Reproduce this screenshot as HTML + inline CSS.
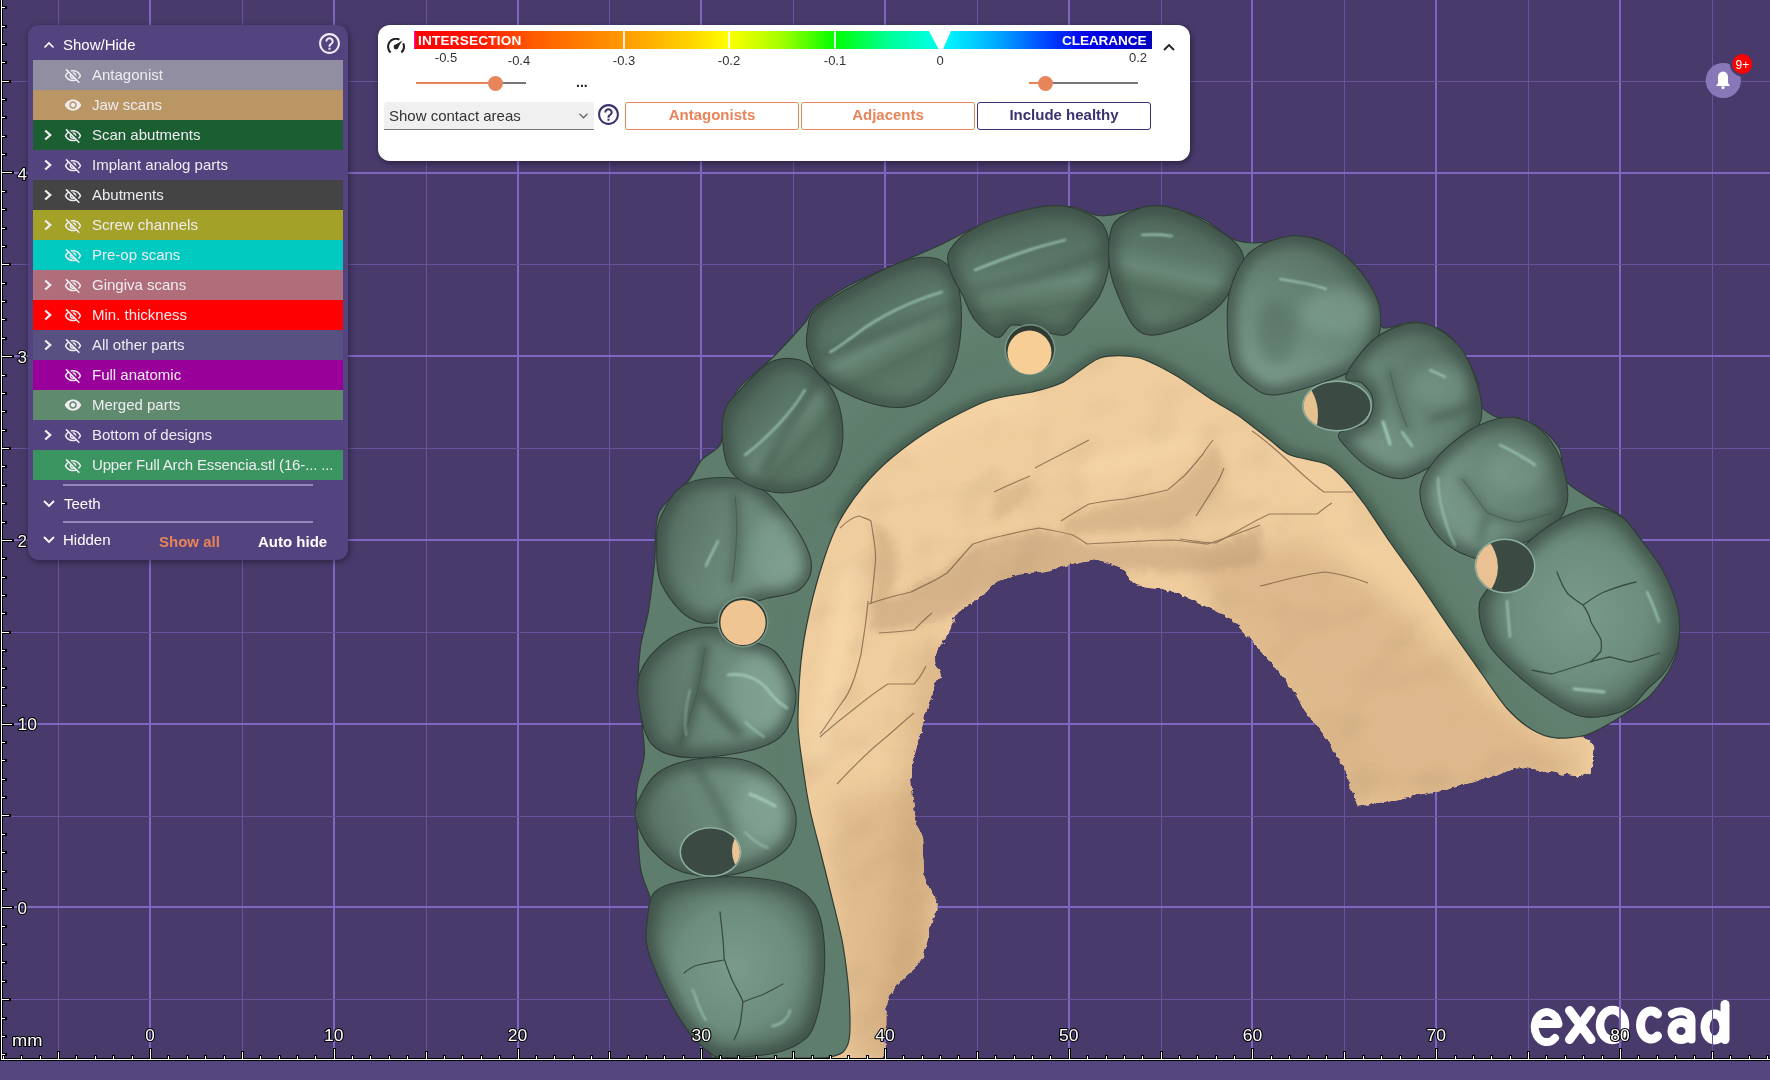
<!DOCTYPE html>
<html><head><meta charset="utf-8">
<style>
*{margin:0;padding:0;box-sizing:border-box}
html,body{width:1770px;height:1080px;overflow:hidden;background:#483b6c;font-family:"Liberation Sans",sans-serif}
#vp{position:absolute;left:0;top:0;width:1770px;height:1080px}
.lab text{font-family:"Liberation Sans",sans-serif;font-size:17px;fill:#fff;stroke:#000;stroke-width:2.2px;paint-order:stroke;stroke-linejoin:round}
#panel{position:absolute;left:28px;top:25px;width:320px;height:535px;background:#53437f;border-radius:11px;box-shadow:1px 2px 7px rgba(0,0,0,0.42)}
.hdr{position:absolute;left:35px;top:11px;font-size:15px;color:#fff;line-height:18px}
.row{position:absolute;left:5px;width:310px;height:30px;color:#efecf1;font-size:15px;line-height:30px}
.row .t{position:absolute;left:59px;top:0}
.row svg{position:absolute}
#tb{position:absolute;left:378px;top:25px;width:812px;height:136px;background:#fff;border-radius:12px;box-shadow:1px 2px 6px rgba(0,0,0,0.45)}
.btn{position:absolute;top:77px;height:28px;border:1.5px solid #e8845a;border-radius:3px;color:#e8845a;font-weight:bold;font-size:15px;line-height:23px;text-align:center}
.num{position:absolute;font-size:13px;color:#333;line-height:14px;transform:translateX(-50%)}
</style></head><body>
<svg id="vp" width="1770" height="1080" viewBox="0 0 1770 1080">
<rect x="0" y="1061" width="1770" height="19" fill="#55457f"/>
<g fill="none" stroke="#fff" stroke-width="9" stroke-linecap="round" stroke-linejoin="round">
<path d="M1535.5,1024 L1558.5,1024 A12,15 0 1 0 1555,1038" stroke-width="8"/>
<path d="M1569.5,1010.5 L1591,1039.5 M1591,1010.5 L1569.5,1039.5"/>
<ellipse cx="1612.5" cy="1025" rx="12.5" ry="15" stroke-width="8.5"/>
<path d="M1657.5,1014 A10.5,14 0 1 0 1657.5,1036"/>
<path d="M1672,1014 C1680,1009 1691,1011 1691.5,1020 L1691.5,1039.5" stroke-width="8"/>
<ellipse cx="1681" cy="1031" rx="9" ry="8.5"/>
<ellipse cx="1714.5" cy="1027" rx="9.5" ry="13"/>
<path d="M1725,1004.5 L1725,1039.5"/>
</g>
<rect x="149" y="0" width="2" height="1058" fill="#7f66c0"/>
<rect x="333" y="0" width="2" height="1058" fill="#7f66c0"/>
<rect x="517" y="0" width="2" height="1058" fill="#7f66c0"/>
<rect x="700" y="0" width="2" height="1058" fill="#7f66c0"/>
<rect x="884" y="0" width="2" height="1058" fill="#7f66c0"/>
<rect x="1068" y="0" width="2" height="1058" fill="#7f66c0"/>
<rect x="1251" y="0" width="2" height="1058" fill="#7f66c0"/>
<rect x="1435" y="0" width="2" height="1058" fill="#7f66c0"/>
<rect x="1619" y="0" width="2" height="1058" fill="#7f66c0"/>
<rect x="58" y="0" width="1" height="1058" fill="#67539d"/>
<rect x="242" y="0" width="1" height="1058" fill="#67539d"/>
<rect x="426" y="0" width="1" height="1058" fill="#67539d"/>
<rect x="609" y="0" width="1" height="1058" fill="#67539d"/>
<rect x="793" y="0" width="1" height="1058" fill="#67539d"/>
<rect x="977" y="0" width="1" height="1058" fill="#67539d"/>
<rect x="1161" y="0" width="1" height="1058" fill="#67539d"/>
<rect x="1344" y="0" width="1" height="1058" fill="#67539d"/>
<rect x="1528" y="0" width="1" height="1058" fill="#67539d"/>
<rect x="1712" y="0" width="1" height="1058" fill="#67539d"/>
<rect x="0" y="172" width="1770" height="2" fill="#7f66c0"/>
<rect x="0" y="355" width="1770" height="2" fill="#7f66c0"/>
<rect x="0" y="539" width="1770" height="2" fill="#7f66c0"/>
<rect x="0" y="723" width="1770" height="2" fill="#7f66c0"/>
<rect x="0" y="906" width="1770" height="2" fill="#7f66c0"/>
<rect x="0" y="81" width="1770" height="1" fill="#67539d"/>
<rect x="0" y="264" width="1770" height="1" fill="#67539d"/>
<rect x="0" y="448" width="1770" height="1" fill="#67539d"/>
<rect x="0" y="632" width="1770" height="1" fill="#67539d"/>
<rect x="0" y="816" width="1770" height="1" fill="#67539d"/>
<rect x="0" y="999" width="1770" height="1" fill="#67539d"/>
<clipPath id="cmodel"><rect x="0" y="0" width="1770" height="1058"/></clipPath><g clip-path="url(#cmodel)"><defs>
<radialGradient id="gt1" cx="0.5" cy="0.5" r="0.6"><stop offset="0" stop-color="#7a9a8a"/><stop offset="0.55" stop-color="#6d8d7d"/><stop offset="1" stop-color="#4c6457"/></radialGradient><linearGradient id="gt12" gradientUnits="userSpaceOnUse" x1="637" y1="842" x2="788" y2="794"><stop offset="0" stop-color="#566f62"/><stop offset="0.45" stop-color="#688676"/><stop offset="1" stop-color="#7d9d8d"/></linearGradient><linearGradient id="gt11" gradientUnits="userSpaceOnUse" x1="640" y1="695" x2="795" y2="696"><stop offset="0" stop-color="#566f62"/><stop offset="0.45" stop-color="#688676"/><stop offset="1" stop-color="#7d9d8d"/></linearGradient><linearGradient id="gt10" gradientUnits="userSpaceOnUse" x1="658" y1="527" x2="801" y2="586"><stop offset="0" stop-color="#566f62"/><stop offset="0.45" stop-color="#688676"/><stop offset="1" stop-color="#7d9d8d"/></linearGradient><linearGradient id="gt2" gradientUnits="userSpaceOnUse" x1="736" y1="381" x2="833" y2="471"><stop offset="0" stop-color="#4a6054"/><stop offset="0.4" stop-color="#5a7768"/><stop offset="0.55" stop-color="#6a8878"/><stop offset="0.7" stop-color="#55705f"/><stop offset="1" stop-color="#62806f"/></linearGradient><linearGradient id="gt3" gradientUnits="userSpaceOnUse" x1="852" y1="265" x2="923" y2="400"><stop offset="0" stop-color="#4a6054"/><stop offset="0.4" stop-color="#5a7768"/><stop offset="0.55" stop-color="#6a8878"/><stop offset="0.7" stop-color="#55705f"/><stop offset="1" stop-color="#62806f"/></linearGradient><linearGradient id="gt4" gradientUnits="userSpaceOnUse" x1="1022" y1="199" x2="1041" y2="356"><stop offset="0" stop-color="#4a6054"/><stop offset="0.4" stop-color="#5a7768"/><stop offset="0.55" stop-color="#6a8878"/><stop offset="0.7" stop-color="#55705f"/><stop offset="1" stop-color="#62806f"/></linearGradient><linearGradient id="gt5" gradientUnits="userSpaceOnUse" x1="1187" y1="202" x2="1159" y2="332"><stop offset="0" stop-color="#4a6054"/><stop offset="0.4" stop-color="#5a7768"/><stop offset="0.55" stop-color="#6a8878"/><stop offset="0.7" stop-color="#55705f"/><stop offset="1" stop-color="#62806f"/></linearGradient><linearGradient id="gt6" gradientUnits="userSpaceOnUse" x1="1343" y1="248" x2="1263" y2="386"><stop offset="0" stop-color="#566f62"/><stop offset="0.45" stop-color="#688676"/><stop offset="1" stop-color="#7d9d8d"/></linearGradient><linearGradient id="gt7" gradientUnits="userSpaceOnUse" x1="1459" y1="356" x2="1344" y2="461"><stop offset="0" stop-color="#566f62"/><stop offset="0.45" stop-color="#688676"/><stop offset="1" stop-color="#7d9d8d"/></linearGradient><linearGradient id="gt8" gradientUnits="userSpaceOnUse" x1="1566" y1="458" x2="1434" y2="524"><stop offset="0" stop-color="#566f62"/><stop offset="0.45" stop-color="#688676"/><stop offset="1" stop-color="#7d9d8d"/></linearGradient><radialGradient id="gt9" cx="0.5" cy="0.5" r="0.6"><stop offset="0" stop-color="#7a9a8a"/><stop offset="0.55" stop-color="#6d8d7d"/><stop offset="1" stop-color="#4c6457"/></radialGradient>
<filter id="b1" filterUnits="userSpaceOnUse" x="0" y="0" width="1770" height="1080"><feGaussianBlur stdDeviation="0.8"/></filter>
<filter id="b2" filterUnits="userSpaceOnUse" x="0" y="0" width="1770" height="1080"><feGaussianBlur stdDeviation="2"/></filter>
<filter id="b4" filterUnits="userSpaceOnUse" x="0" y="0" width="1770" height="1080"><feGaussianBlur stdDeviation="4"/></filter>
<filter id="b7" filterUnits="userSpaceOnUse" x="0" y="0" width="1770" height="1080"><feGaussianBlur stdDeviation="7"/></filter>
<filter id="b12" filterUnits="userSpaceOnUse" x="0" y="0" width="1770" height="1080"><feGaussianBlur stdDeviation="12"/></filter>
<clipPath id="ct1"><path d="M647.0,923.0 C648.3,914.0 647.8,899.2 655.0,892.0 C662.2,884.8 675.8,882.5 690.0,880.0 C704.2,877.5 723.3,876.2 740.0,877.0 C756.7,877.8 777.5,880.3 790.0,885.0 C802.5,889.7 809.3,895.8 815.0,905.0 C820.7,914.2 822.7,926.7 824.0,940.0 C825.3,953.3 824.8,970.3 823.0,985.0 C821.2,999.7 817.2,1018.2 813.0,1028.0 C808.8,1037.8 804.3,1039.8 798.0,1044.0 C791.7,1048.2 784.0,1050.8 775.0,1053.0 C766.0,1055.2 753.3,1056.3 744.0,1057.0 C734.7,1057.7 724.7,1057.7 719.0,1057.0 C713.3,1056.3 714.4,1056.3 710.0,1053.0 C705.6,1049.7 698.6,1044.0 692.8,1037.0 C687.0,1030.0 680.9,1020.9 675.0,1010.7 C669.1,1000.5 662.3,986.4 657.6,975.6 C652.9,964.8 648.8,954.8 647.0,946.0 C645.2,937.2 645.7,932.0 647.0,923.0 Z"/></clipPath>
<clipPath id="ct12"><path d="M636.3,806.0 C639.4,797.2 647.2,781.5 656.7,773.7 C666.2,766.0 679.1,761.9 693.3,759.5 C707.5,757.1 728.4,756.5 742.0,759.5 C755.6,762.5 766.0,769.3 774.8,777.8 C783.6,786.3 792.3,799.5 795.0,810.4 C797.7,821.3 795.7,834.2 791.0,843.0 C786.3,851.8 777.5,857.6 766.7,863.0 C755.9,868.4 740.3,874.2 726.0,875.6 C711.7,877.0 693.2,875.6 681.0,871.5 C668.8,867.4 659.7,858.5 652.6,851.0 C645.5,843.5 641.0,834.2 638.3,826.7 C635.6,819.2 633.2,814.8 636.3,806.0 Z"/></clipPath>
<clipPath id="ct11"><path d="M640.4,672.0 C645.2,659.7 657.5,646.5 669.0,639.0 C680.5,631.5 697.4,627.0 709.6,627.0 C721.8,627.0 731.1,634.9 742.0,639.0 C752.9,643.1 766.0,643.3 774.8,651.5 C783.6,659.7 792.3,676.5 795.0,688.0 C797.7,699.5 794.4,711.9 791.0,720.7 C787.6,729.5 783.6,735.6 774.8,741.0 C766.0,746.4 753.0,750.3 738.0,753.0 C723.0,755.7 699.2,758.7 685.0,757.4 C670.8,756.1 660.0,752.5 652.6,745.0 C645.2,737.5 642.4,724.8 640.4,712.6 C638.4,700.4 635.6,684.3 640.4,672.0 Z"/></clipPath>
<clipPath id="ct10"><path d="M660.7,517.0 C665.4,506.8 672.8,490.9 685.0,484.4 C697.2,477.9 720.4,476.6 734.0,478.0 C747.6,479.4 755.9,483.4 766.7,492.6 C777.5,501.8 791.5,520.8 799.0,533.0 C806.5,545.2 811.5,556.5 811.5,566.0 C811.5,575.5 806.5,584.6 799.0,590.0 C791.5,595.4 776.2,595.7 766.7,598.5 C757.2,601.3 750.8,602.6 742.0,606.7 C733.2,610.8 723.2,621.6 713.7,623.0 C704.2,624.4 693.8,621.6 685.0,614.8 C676.2,608.0 665.4,593.5 660.7,582.0 C656.0,570.5 656.7,556.4 656.7,545.6 C656.7,534.8 656.0,527.2 660.7,517.0 Z"/></clipPath>
<clipPath id="ct2"><path d="M740.0,390.0 C747.5,382.1 760.0,367.5 770.0,362.5 C780.0,357.5 791.7,357.9 800.0,360.0 C808.3,362.1 814.2,369.2 820.0,375.0 C825.8,380.8 831.2,386.7 835.0,395.0 C838.8,403.3 841.7,415.0 842.5,425.0 C843.3,435.0 842.9,445.8 840.0,455.0 C837.1,464.2 833.3,473.8 825.0,480.0 C816.7,486.2 801.7,491.2 790.0,492.5 C778.3,493.8 765.0,491.2 755.0,487.5 C745.0,483.8 735.4,477.9 730.0,470.0 C724.6,462.1 723.3,450.0 722.5,440.0 C721.7,430.0 722.1,418.3 725.0,410.0 C727.9,401.7 732.5,397.9 740.0,390.0 Z"/></clipPath>
<clipPath id="ct3"><path d="M807.5,330.0 C808.8,323.3 807.9,317.1 815.0,310.0 C822.1,302.9 835.8,295.4 850.0,287.5 C864.2,279.6 886.7,267.5 900.0,262.5 C913.3,257.5 921.7,256.7 930.0,257.5 C938.3,258.3 945.0,261.2 950.0,267.5 C955.0,273.8 958.3,282.9 960.0,295.0 C961.7,307.1 961.7,326.7 960.0,340.0 C958.3,353.3 955.8,365.0 950.0,375.0 C944.2,385.0 934.2,394.6 925.0,400.0 C915.8,405.4 906.7,407.9 895.0,407.5 C883.3,407.1 867.5,402.9 855.0,397.5 C842.5,392.1 827.9,382.9 820.0,375.0 C812.1,367.1 809.6,357.5 807.5,350.0 C805.4,342.5 806.2,336.7 807.5,330.0 Z"/></clipPath>
<clipPath id="ct4"><path d="M950.0,250.0 C954.2,242.9 962.5,234.2 975.0,227.5 C987.5,220.8 1010.4,213.6 1025.0,210.0 C1039.6,206.4 1050.8,204.8 1062.5,206.0 C1074.2,207.2 1087.5,212.7 1095.0,217.5 C1102.5,222.3 1105.2,227.1 1107.5,235.0 C1109.8,242.9 1110.0,255.0 1108.8,265.0 C1107.5,275.0 1104.8,285.8 1100.0,295.0 C1095.2,304.2 1085.8,313.3 1080.0,320.0 C1074.2,326.7 1072.1,333.3 1065.0,335.0 C1057.9,336.7 1046.2,331.7 1037.5,330.0 C1028.8,328.3 1019.2,323.8 1012.5,325.0 C1005.8,326.2 1003.8,338.3 997.5,337.5 C991.2,336.7 980.8,327.1 975.0,320.0 C969.2,312.9 966.7,303.3 962.5,295.0 C958.3,286.7 952.1,277.5 950.0,270.0 C947.9,262.5 945.8,257.1 950.0,250.0 Z"/></clipPath>
<clipPath id="ct5"><path d="M1110.0,235.0 C1111.7,226.2 1113.3,222.3 1120.0,217.5 C1126.7,212.7 1140.0,207.2 1150.0,206.0 C1160.0,204.8 1170.0,206.8 1180.0,210.0 C1190.0,213.2 1200.8,219.6 1210.0,225.0 C1219.2,230.4 1229.4,236.7 1235.0,242.5 C1240.6,248.3 1243.8,253.3 1243.8,260.0 C1243.8,266.7 1239.0,275.0 1235.0,282.5 C1231.0,290.0 1226.7,298.3 1220.0,305.0 C1213.3,311.7 1205.8,317.5 1195.0,322.5 C1184.2,327.5 1165.0,334.2 1155.0,335.0 C1145.0,335.8 1140.8,333.3 1135.0,327.5 C1129.2,321.7 1124.2,309.6 1120.0,300.0 C1115.8,290.4 1111.7,280.8 1110.0,270.0 C1108.3,259.2 1108.3,243.8 1110.0,235.0 Z"/></clipPath>
<clipPath id="ct6"><path d="M1230.0,290.0 C1233.8,277.1 1240.0,261.5 1250.0,252.5 C1260.0,243.5 1277.5,237.7 1290.0,236.0 C1302.5,234.3 1315.0,238.5 1325.0,242.5 C1335.0,246.5 1342.5,252.9 1350.0,260.0 C1357.5,267.1 1365.0,276.7 1370.0,285.0 C1375.0,293.3 1378.8,300.8 1380.0,310.0 C1381.2,319.2 1380.8,330.8 1377.5,340.0 C1374.2,349.2 1367.9,358.3 1360.0,365.0 C1352.1,371.7 1344.2,375.0 1330.0,380.0 C1315.8,385.0 1288.3,394.2 1275.0,395.0 C1261.7,395.8 1257.1,390.0 1250.0,385.0 C1242.9,380.0 1236.2,374.2 1232.5,365.0 C1228.8,355.8 1227.9,342.5 1227.5,330.0 C1227.1,317.5 1226.2,302.9 1230.0,290.0 Z"/></clipPath>
<clipPath id="ct7"><path d="M1346.0,376.0 C1348.5,368.3 1364.5,345.8 1377.0,337.0 C1389.5,328.2 1407.3,321.5 1421.0,323.0 C1434.7,324.5 1449.5,335.3 1459.0,346.0 C1468.5,356.7 1474.3,374.8 1478.0,387.0 C1481.7,399.2 1483.2,409.5 1481.0,419.0 C1478.8,428.5 1472.3,436.7 1465.0,444.0 C1457.7,451.3 1447.4,457.2 1437.0,463.0 C1426.6,468.8 1413.5,477.6 1402.5,478.6 C1391.5,479.6 1380.4,474.3 1371.0,469.0 C1361.6,463.7 1351.2,453.0 1346.0,447.0 C1340.8,441.0 1336.3,437.0 1339.6,433.0 C1342.9,429.0 1360.4,428.5 1366.0,423.0 C1371.6,417.5 1373.7,406.7 1373.0,400.0 C1372.3,393.3 1366.5,387.0 1362.0,383.0 C1357.5,379.0 1343.5,383.7 1346.0,376.0 Z"/></clipPath>
<clipPath id="ct8"><path d="M1420.0,490.0 C1420.8,479.2 1426.7,470.0 1435.0,460.0 C1443.3,450.0 1458.3,437.1 1470.0,430.0 C1481.7,422.9 1495.0,418.8 1505.0,417.5 C1515.0,416.2 1522.5,418.8 1530.0,422.5 C1537.5,426.2 1544.6,432.9 1550.0,440.0 C1555.4,447.1 1559.6,455.0 1562.5,465.0 C1565.4,475.0 1568.8,490.0 1567.5,500.0 C1566.2,510.0 1561.2,518.3 1555.0,525.0 C1548.8,531.7 1538.3,535.8 1530.0,540.0 C1521.7,544.2 1512.1,546.7 1505.0,550.0 C1497.9,553.3 1495.8,560.0 1487.5,560.0 C1479.2,560.0 1464.6,555.8 1455.0,550.0 C1445.4,544.2 1435.8,535.0 1430.0,525.0 C1424.2,515.0 1419.2,500.8 1420.0,490.0 Z"/></clipPath>
<clipPath id="ct9"><path d="M1479.0,610.0 C1479.0,600.8 1479.3,600.3 1488.0,588.6 C1496.7,576.9 1517.7,552.0 1531.0,539.7 C1544.3,527.4 1556.8,520.4 1568.0,515.0 C1579.2,509.6 1588.8,507.1 1598.0,507.6 C1607.2,508.1 1615.8,512.6 1623.0,518.0 C1630.2,523.4 1634.4,531.0 1641.0,539.7 C1647.6,548.4 1656.4,558.3 1662.6,570.0 C1668.8,581.7 1675.4,597.7 1678.0,610.0 C1680.6,622.3 1680.1,633.4 1678.0,643.6 C1675.9,653.8 1670.8,663.4 1665.6,671.0 C1660.4,678.6 1653.1,683.3 1647.0,689.5 C1640.9,695.7 1637.2,703.4 1629.0,708.0 C1620.8,712.6 1607.2,716.0 1598.0,717.0 C1588.8,718.0 1583.2,717.6 1574.0,714.0 C1564.8,710.4 1553.2,702.8 1543.0,695.6 C1532.8,688.4 1522.2,679.7 1513.0,671.0 C1503.8,662.3 1493.7,653.8 1488.0,643.6 C1482.3,633.4 1479.0,619.2 1479.0,610.0 Z"/></clipPath>
<clipPath id="cbeige"><path d="M790.0,1058.0 C778.1,1048.2 766.0,985.8 760.0,960.0 C754.0,934.2 733.0,832.0 730.0,800.0 C727.0,768.0 727.0,668.0 730.0,640.0 C733.0,612.0 751.0,542.0 760.0,520.0 C769.0,498.0 804.0,438.0 820.0,420.0 C836.0,402.0 897.0,352.0 920.0,340.0 C943.0,328.0 1022.0,303.0 1050.0,300.0 C1078.0,297.0 1172.0,300.0 1200.0,310.0 C1228.0,320.0 1308.0,381.0 1330.0,400.0 C1352.0,419.0 1403.0,478.0 1420.0,500.0 C1437.0,522.0 1486.0,598.0 1500.0,620.0 C1514.0,642.0 1551.4,708.2 1560.0,720.0 C1568.6,731.8 1582.8,735.5 1586.0,738.0 C1589.2,740.5 1591.6,741.8 1592.0,745.0 C1592.4,748.2 1591.8,767.0 1590.0,770.0 C1588.2,773.0 1581.1,775.4 1574.0,775.0 C1566.9,774.6 1526.4,766.3 1519.0,766.0 C1511.6,765.7 1508.3,769.6 1500.0,772.0 C1491.7,774.4 1450.0,786.7 1436.0,790.0 C1422.0,793.3 1368.0,803.5 1360.0,805.0 C1352.0,806.5 1357.2,808.7 1355.6,805.0 C1354.0,801.3 1347.0,774.6 1344.0,768.0 C1341.0,761.4 1329.7,744.0 1326.0,738.5 C1322.3,733.0 1311.5,718.9 1307.0,712.6 C1302.5,706.3 1287.0,682.7 1281.5,675.6 C1276.0,668.5 1258.0,648.3 1252.0,642.0 C1246.0,635.7 1230.2,617.8 1222.0,612.6 C1213.8,607.4 1178.9,593.0 1170.0,590.0 C1161.1,587.0 1137.8,585.2 1133.0,583.0 C1128.2,580.8 1126.4,570.4 1122.0,568.0 C1117.6,565.6 1096.8,558.8 1089.0,559.0 C1081.2,559.2 1051.2,568.6 1044.0,570.0 C1036.8,571.4 1022.1,571.5 1017.0,572.6 C1011.9,573.8 996.5,579.5 993.0,581.5 C989.5,583.5 985.0,590.0 981.5,593.0 C978.0,596.0 961.3,607.1 957.8,611.0 C954.2,614.9 948.4,627.2 946.0,632.0 C943.6,636.8 934.6,654.1 934.0,658.5 C933.4,662.9 939.9,673.9 940.0,676.0 C940.1,678.1 936.6,676.1 935.0,680.0 C933.4,683.9 926.5,706.2 924.0,715.0 C921.5,723.8 911.0,758.1 910.0,768.0 C909.0,777.9 912.9,807.0 914.0,814.0 C915.1,821.0 920.0,831.7 921.0,838.0 C922.0,844.3 922.4,870.6 924.0,877.0 C925.6,883.4 935.9,897.6 936.6,901.8 C937.3,906.0 932.6,913.4 931.0,919.0 C929.4,924.6 924.1,952.0 921.0,958.0 C917.9,964.0 903.5,974.8 900.0,979.0 C896.5,983.2 887.2,994.7 885.6,1000.0 C884.0,1005.3 884.7,1026.2 884.0,1032.0 C883.3,1037.8 888.0,1055.4 878.6,1058.0 C869.2,1060.6 801.9,1067.8 790.0,1058.0 Z"/></clipPath>
<clipPath id="couter"><path d="M719.0,1058.0 C705.0,1057.3 713.5,1055.8 710.0,1053.0 C706.5,1050.2 697.5,1042.6 692.8,1037.0 C688.1,1031.4 679.7,1018.9 675.0,1010.7 C670.3,1002.5 661.3,984.2 657.6,975.6 C653.9,967.0 648.4,953.0 647.0,946.0 C645.6,939.0 646.5,929.1 647.0,923.0 C647.5,916.9 651.5,907.4 650.6,900.0 C649.7,892.6 642.3,881.5 640.4,867.4 C638.5,853.3 635.8,809.3 636.3,794.0 C636.8,778.7 644.1,767.1 644.4,753.0 C644.7,738.9 638.8,702.1 638.3,688.0 C637.8,673.9 639.0,657.7 640.4,647.4 C641.8,637.1 646.6,622.1 648.5,610.7 C650.4,599.3 653.2,575.0 654.6,562.0 C656.0,549.0 654.1,523.9 658.7,513.0 C663.3,502.1 683.3,487.1 689.0,480.0 C694.7,472.9 697.4,464.7 701.5,460.0 C705.6,455.3 716.9,450.3 720.0,445.0 C723.1,439.7 722.7,427.3 725.0,420.0 C727.3,412.7 731.5,398.0 737.5,390.0 C743.5,382.0 764.3,365.3 770.0,360.0 C775.7,354.7 775.3,355.0 780.0,350.0 C784.7,345.0 800.3,328.2 805.0,322.5 C809.7,316.8 809.0,312.5 815.0,307.5 C821.0,302.5 838.7,291.0 850.0,285.0 C861.3,279.0 888.0,267.8 900.0,262.5 C912.0,257.2 930.0,249.7 940.0,245.0 C950.0,240.3 965.3,231.5 975.0,227.5 C984.7,223.5 1002.5,217.9 1012.5,215.0 C1022.5,212.1 1041.7,207.0 1050.0,206.0 C1058.3,205.0 1069.0,206.3 1075.0,207.5 C1081.0,208.7 1090.0,214.0 1095.0,215.0 C1100.0,216.0 1105.2,216.2 1112.5,215.0 C1119.8,213.8 1141.7,206.8 1150.0,206.0 C1158.3,205.2 1167.7,207.1 1175.0,209.0 C1182.3,210.9 1197.0,215.9 1205.0,220.0 C1213.0,224.1 1227.0,237.0 1235.0,240.0 C1243.0,243.0 1257.7,243.0 1265.0,242.5 C1272.3,242.0 1282.7,236.3 1290.0,236.0 C1297.3,235.7 1312.0,236.8 1320.0,240.0 C1328.0,243.2 1343.3,254.0 1350.0,260.0 C1356.7,266.0 1366.3,279.3 1370.0,285.0 C1373.7,290.7 1375.8,296.8 1377.5,302.5 C1379.2,308.2 1378.5,324.8 1382.5,327.5 C1386.5,330.2 1402.5,323.2 1407.5,322.5 C1412.5,321.8 1415.0,321.2 1420.0,322.5 C1425.0,323.8 1439.0,328.2 1445.0,332.5 C1451.0,336.8 1460.7,348.3 1465.0,355.0 C1469.3,361.7 1475.5,375.8 1477.5,382.5 C1479.5,389.2 1477.3,400.3 1480.0,405.0 C1482.7,409.7 1492.5,415.8 1497.5,417.5 C1502.5,419.2 1511.5,415.8 1517.5,417.5 C1523.5,419.2 1536.8,425.7 1542.5,430.0 C1548.2,434.3 1557.0,443.3 1560.0,450.0 C1563.0,456.7 1560.7,473.3 1565.0,480.0 C1569.3,486.7 1585.2,495.3 1592.5,500.0 C1599.8,504.7 1613.5,509.7 1620.0,515.0 C1626.5,520.3 1634.9,531.4 1641.0,540.0 C1647.1,548.6 1660.7,569.4 1665.6,579.5 C1670.5,589.6 1676.3,607.0 1678.0,616.0 C1679.7,625.0 1679.2,639.4 1678.0,646.7 C1676.8,654.0 1672.4,664.5 1668.7,671.0 C1665.0,677.5 1655.3,690.3 1650.0,695.6 C1644.7,700.9 1634.3,707.3 1629.0,711.0 C1623.7,714.7 1616.3,719.8 1610.6,723.0 C1604.9,726.2 1593.3,733.0 1586.0,735.0 C1578.7,737.0 1562.9,738.8 1555.6,738.0 C1548.3,737.2 1537.5,733.0 1531.0,729.0 C1524.5,725.0 1513.2,715.3 1506.7,708.0 C1500.2,700.7 1489.3,684.3 1482.0,674.0 C1474.7,663.7 1459.8,642.8 1451.7,631.0 C1443.6,619.2 1429.1,597.3 1421.0,585.6 C1412.9,573.9 1398.1,553.7 1390.6,543.0 C1383.1,532.3 1371.1,513.4 1365.0,505.0 C1358.9,496.6 1350.2,485.5 1345.0,480.0 C1339.8,474.5 1333.3,467.3 1326.0,464.0 C1318.7,460.7 1297.5,458.2 1290.0,455.0 C1282.5,451.8 1277.0,445.3 1270.0,440.0 C1263.0,434.7 1245.2,420.3 1237.5,415.0 C1229.8,409.7 1220.8,405.3 1212.5,400.0 C1204.2,394.7 1185.0,380.7 1175.0,375.0 C1165.0,369.3 1147.5,359.8 1137.5,357.5 C1127.5,355.2 1110.0,354.7 1100.0,358.0 C1090.0,361.3 1071.6,378.0 1062.5,382.5 C1053.4,387.0 1042.0,389.6 1032.0,392.0 C1022.0,394.4 1000.5,396.0 987.4,400.7 C974.3,405.4 946.6,419.9 934.0,427.4 C921.4,434.9 902.1,449.1 892.6,457.0 C883.1,464.9 870.1,478.0 863.0,486.7 C855.9,495.4 844.1,512.5 839.0,522.0 C833.9,531.5 828.3,545.9 824.4,557.8 C820.5,569.7 812.8,596.8 809.6,611.0 C806.4,625.2 802.2,649.2 800.7,664.4 C799.2,679.6 797.7,711.2 798.0,725.0 C798.3,738.8 801.4,756.7 803.0,768.0 C804.6,779.3 807.7,799.1 810.0,810.0 C812.3,820.9 817.3,839.3 820.0,850.0 C822.7,860.7 827.1,878.0 830.0,890.0 C832.9,902.0 839.6,927.6 842.0,940.0 C844.4,952.4 846.9,972.6 848.0,983.0 C849.1,993.4 849.9,1010.4 850.0,1018.0 C850.1,1025.6 849.9,1035.5 849.0,1040.0 C848.1,1044.5 845.5,1049.7 843.0,1052.0 C840.5,1054.3 833.7,1056.2 830.0,1057.0 C826.3,1057.8 829.8,1057.9 815.0,1058.0 C800.2,1058.1 733.0,1058.7 719.0,1058.0 Z"/></clipPath>
<filter id="bump" filterUnits="userSpaceOnUse" x="700" y="300" width="950" height="760"><feTurbulence type="fractalNoise" baseFrequency="0.014" numOctaves="2" seed="11" result="n"/><feDiffuseLighting in="n" surfaceScale="4.5" diffuseConstant="1.22" lighting-color="#ffffff" result="l"><feDistantLight azimuth="235" elevation="55"/></feDiffuseLighting><feComposite in="l" in2="SourceGraphic" operator="arithmetic" k1="1" k2="0" k3="0" k4="0"/></filter>
</defs>
<filter id="rough" filterUnits="userSpaceOnUse" x="650" y="250" width="1000" height="830"><feTurbulence type="turbulence" baseFrequency="0.09" numOctaves="2" seed="5" result="t"/><feDisplacementMap in="SourceGraphic" in2="t" scale="5" xChannelSelector="R" yChannelSelector="G"/></filter>
<g filter="url(#rough)">
<path d="M790.0,1058.0 C778.1,1048.2 766.0,985.8 760.0,960.0 C754.0,934.2 733.0,832.0 730.0,800.0 C727.0,768.0 727.0,668.0 730.0,640.0 C733.0,612.0 751.0,542.0 760.0,520.0 C769.0,498.0 804.0,438.0 820.0,420.0 C836.0,402.0 897.0,352.0 920.0,340.0 C943.0,328.0 1022.0,303.0 1050.0,300.0 C1078.0,297.0 1172.0,300.0 1200.0,310.0 C1228.0,320.0 1308.0,381.0 1330.0,400.0 C1352.0,419.0 1403.0,478.0 1420.0,500.0 C1437.0,522.0 1486.0,598.0 1500.0,620.0 C1514.0,642.0 1551.4,708.2 1560.0,720.0 C1568.6,731.8 1582.8,735.5 1586.0,738.0 C1589.2,740.5 1591.6,741.8 1592.0,745.0 C1592.4,748.2 1591.8,767.0 1590.0,770.0 C1588.2,773.0 1581.1,775.4 1574.0,775.0 C1566.9,774.6 1526.4,766.3 1519.0,766.0 C1511.6,765.7 1508.3,769.6 1500.0,772.0 C1491.7,774.4 1450.0,786.7 1436.0,790.0 C1422.0,793.3 1368.0,803.5 1360.0,805.0 C1352.0,806.5 1357.2,808.7 1355.6,805.0 C1354.0,801.3 1347.0,774.6 1344.0,768.0 C1341.0,761.4 1329.7,744.0 1326.0,738.5 C1322.3,733.0 1311.5,718.9 1307.0,712.6 C1302.5,706.3 1287.0,682.7 1281.5,675.6 C1276.0,668.5 1258.0,648.3 1252.0,642.0 C1246.0,635.7 1230.2,617.8 1222.0,612.6 C1213.8,607.4 1178.9,593.0 1170.0,590.0 C1161.1,587.0 1137.8,585.2 1133.0,583.0 C1128.2,580.8 1126.4,570.4 1122.0,568.0 C1117.6,565.6 1096.8,558.8 1089.0,559.0 C1081.2,559.2 1051.2,568.6 1044.0,570.0 C1036.8,571.4 1022.1,571.5 1017.0,572.6 C1011.9,573.8 996.5,579.5 993.0,581.5 C989.5,583.5 985.0,590.0 981.5,593.0 C978.0,596.0 961.3,607.1 957.8,611.0 C954.2,614.9 948.4,627.2 946.0,632.0 C943.6,636.8 934.6,654.1 934.0,658.5 C933.4,662.9 939.9,673.9 940.0,676.0 C940.1,678.1 936.6,676.1 935.0,680.0 C933.4,683.9 926.5,706.2 924.0,715.0 C921.5,723.8 911.0,758.1 910.0,768.0 C909.0,777.9 912.9,807.0 914.0,814.0 C915.1,821.0 920.0,831.7 921.0,838.0 C922.0,844.3 922.4,870.6 924.0,877.0 C925.6,883.4 935.9,897.6 936.6,901.8 C937.3,906.0 932.6,913.4 931.0,919.0 C929.4,924.6 924.1,952.0 921.0,958.0 C917.9,964.0 903.5,974.8 900.0,979.0 C896.5,983.2 887.2,994.7 885.6,1000.0 C884.0,1005.3 884.7,1026.2 884.0,1032.0 C883.3,1037.8 888.0,1055.4 878.6,1058.0 C869.2,1060.6 801.9,1067.8 790.0,1058.0 Z" fill="#ebc795"/>
<g clip-path="url(#cbeige)">
<rect x="700" y="300" width="950" height="760" fill="#f0cd9e" filter="url(#bump)"/>
<path d="M1190,560 L1300,540 L1400,600 L1500,700 L1580,745 L1560,790 L1380,810 L1300,700 L1220,620 Z" fill="#b89068" opacity="0.33" filter="url(#b12)"/>
<path d="M830,800 L930,780 L930,1058 L840,1058 Z" fill="#b89068" opacity="0.3" filter="url(#b12)"/>
<path d="M1000,600 C1100,590 1200,640 1290,720 C1330,760 1350,790 1360,810" fill="none" stroke="#b38d62" stroke-width="40" opacity="0.3" filter="url(#b12)"/>
<path d="M935,650 C920,760 920,900 890,1060" fill="none" stroke="#b38d62" stroke-width="40" opacity="0.3" filter="url(#b12)"/>
<path d="M850,560 C840,640 825,700 815,760" fill="none" stroke="#fbe0b3" stroke-width="22" opacity="0.5" filter="url(#b7)"/>
<path d="M900,440 C950,410 1000,395 1040,400" fill="none" stroke="#fadcae" stroke-width="30" opacity="0.45" filter="url(#b12)"/>
<path d="M1300,470 C1380,560 1450,660 1570,740" fill="none" stroke="#f7d6a6" stroke-width="30" opacity="0.4" filter="url(#b12)"/>
<path d="M1080,470 C1120,460 1170,450 1200,430" fill="none" stroke="#fadcae" stroke-width="20" opacity="0.4" filter="url(#b7)"/>
<g fill="#a88460" filter="url(#b4)">
<path d="M870,604 C900,595 930,580 973,545 C1000,536 1030,529 1039,528 C1060,532 1080,540 1087,545 C1120,542 1170,540 1208,545 C1230,540 1250,530 1260,525 L1260,560 C1220,575 1150,570 1090,565 C1040,575 990,585 950,615 C920,625 890,630 870,630 Z" opacity="0.35"/>
<path d="M1061,521 C1080,510 1110,500 1167,490 C1190,470 1205,450 1213,440 L1225,470 C1215,500 1190,520 1170,525 C1120,530 1090,532 1061,535 Z" opacity="0.3"/>
<path d="M880,525 C900,540 905,580 880,605 L870,600 C873,570 872,545 871,521 Z" opacity="0.3"/>
<path d="M994,492 C1010,485 1020,480 1030,476 C1030,500 1010,515 990,520 Z" opacity="0.25"/>
</g>

</g>
</g>
<g clip-path="url(#cbeige)"><g fill="none" stroke="#5e4630" opacity="0.6" stroke-width="1.2">
<path d="M840,528 C848,520 853,517 859,516 C864,518 868,519 871,521 C873,535 876,548 875.6,559 C874,580 872,595 871,604"/>
<path d="M868.5,604 C885,598 898,595 911,592 C925,585 937,580 947,573 C955,565 965,552 973,544 C985,540 995,537 1006,535 C1018,532 1028,530 1039,528 C1050,530 1062,532 1072.6,535 C1078,538 1083,541 1087,544 C1100,543 1112,543 1125,542 C1140,541 1158,540 1172,540 C1185,541 1197,543 1208,544 C1225,538 1243,532 1260,525"/>
<path d="M994,492 C1006,486 1018,481 1030,476"/>
<path d="M1061,521 C1072,514 1080,509 1089,504 C1100,502 1112,500 1125,499 C1140,496 1155,493 1167.5,490 C1174,485 1179,480 1184,476 C1191,469 1197,461 1203,454 C1206,449 1209,445 1213,440"/>
<path d="M1196,516 C1203,505 1210,494 1217,483 C1220,478 1222,473 1224,468"/>
<path d="M1035,468 C1050,460 1070,450 1089,440"/>
<path d="M820,737 C830,728 840,720 849,713 C865,700 878,690 888,684 C900,684 908,684 914,684 C920,678 923,672 926,666"/>
<path d="M837,784 C855,765 868,752 879,743 C895,730 905,720 914,713"/>
<path d="M879,633 C895,632 905,631 914,630 C922,622 928,616 932,613"/>
<path d="M868,601 C866,625 863,640 861,654 C855,680 848,695 843,701 C833,715 825,728 820,734"/>
<path d="M1180,539 C1195,541 1205,543 1216,543 C1240,530 1255,520 1270,514 C1290,514 1305,514 1317,514 C1322,510 1327,506 1332,503"/>
<path d="M1260,586 C1285,580 1305,574 1325,572 C1340,574 1355,578 1368,583"/>
<path d="M1252,431 C1280,450 1300,475 1324,492 C1335,492 1345,492 1353,492"/>
</g>
</g>
<path d="M719.0,1058.0 C705.0,1057.3 713.5,1055.8 710.0,1053.0 C706.5,1050.2 697.5,1042.6 692.8,1037.0 C688.1,1031.4 679.7,1018.9 675.0,1010.7 C670.3,1002.5 661.3,984.2 657.6,975.6 C653.9,967.0 648.4,953.0 647.0,946.0 C645.6,939.0 646.5,929.1 647.0,923.0 C647.5,916.9 651.5,907.4 650.6,900.0 C649.7,892.6 642.3,881.5 640.4,867.4 C638.5,853.3 635.8,809.3 636.3,794.0 C636.8,778.7 644.1,767.1 644.4,753.0 C644.7,738.9 638.8,702.1 638.3,688.0 C637.8,673.9 639.0,657.7 640.4,647.4 C641.8,637.1 646.6,622.1 648.5,610.7 C650.4,599.3 653.2,575.0 654.6,562.0 C656.0,549.0 654.1,523.9 658.7,513.0 C663.3,502.1 683.3,487.1 689.0,480.0 C694.7,472.9 697.4,464.7 701.5,460.0 C705.6,455.3 716.9,450.3 720.0,445.0 C723.1,439.7 722.7,427.3 725.0,420.0 C727.3,412.7 731.5,398.0 737.5,390.0 C743.5,382.0 764.3,365.3 770.0,360.0 C775.7,354.7 775.3,355.0 780.0,350.0 C784.7,345.0 800.3,328.2 805.0,322.5 C809.7,316.8 809.0,312.5 815.0,307.5 C821.0,302.5 838.7,291.0 850.0,285.0 C861.3,279.0 888.0,267.8 900.0,262.5 C912.0,257.2 930.0,249.7 940.0,245.0 C950.0,240.3 965.3,231.5 975.0,227.5 C984.7,223.5 1002.5,217.9 1012.5,215.0 C1022.5,212.1 1041.7,207.0 1050.0,206.0 C1058.3,205.0 1069.0,206.3 1075.0,207.5 C1081.0,208.7 1090.0,214.0 1095.0,215.0 C1100.0,216.0 1105.2,216.2 1112.5,215.0 C1119.8,213.8 1141.7,206.8 1150.0,206.0 C1158.3,205.2 1167.7,207.1 1175.0,209.0 C1182.3,210.9 1197.0,215.9 1205.0,220.0 C1213.0,224.1 1227.0,237.0 1235.0,240.0 C1243.0,243.0 1257.7,243.0 1265.0,242.5 C1272.3,242.0 1282.7,236.3 1290.0,236.0 C1297.3,235.7 1312.0,236.8 1320.0,240.0 C1328.0,243.2 1343.3,254.0 1350.0,260.0 C1356.7,266.0 1366.3,279.3 1370.0,285.0 C1373.7,290.7 1375.8,296.8 1377.5,302.5 C1379.2,308.2 1378.5,324.8 1382.5,327.5 C1386.5,330.2 1402.5,323.2 1407.5,322.5 C1412.5,321.8 1415.0,321.2 1420.0,322.5 C1425.0,323.8 1439.0,328.2 1445.0,332.5 C1451.0,336.8 1460.7,348.3 1465.0,355.0 C1469.3,361.7 1475.5,375.8 1477.5,382.5 C1479.5,389.2 1477.3,400.3 1480.0,405.0 C1482.7,409.7 1492.5,415.8 1497.5,417.5 C1502.5,419.2 1511.5,415.8 1517.5,417.5 C1523.5,419.2 1536.8,425.7 1542.5,430.0 C1548.2,434.3 1557.0,443.3 1560.0,450.0 C1563.0,456.7 1560.7,473.3 1565.0,480.0 C1569.3,486.7 1585.2,495.3 1592.5,500.0 C1599.8,504.7 1613.5,509.7 1620.0,515.0 C1626.5,520.3 1634.9,531.4 1641.0,540.0 C1647.1,548.6 1660.7,569.4 1665.6,579.5 C1670.5,589.6 1676.3,607.0 1678.0,616.0 C1679.7,625.0 1679.2,639.4 1678.0,646.7 C1676.8,654.0 1672.4,664.5 1668.7,671.0 C1665.0,677.5 1655.3,690.3 1650.0,695.6 C1644.7,700.9 1634.3,707.3 1629.0,711.0 C1623.7,714.7 1616.3,719.8 1610.6,723.0 C1604.9,726.2 1593.3,733.0 1586.0,735.0 C1578.7,737.0 1562.9,738.8 1555.6,738.0 C1548.3,737.2 1537.5,733.0 1531.0,729.0 C1524.5,725.0 1513.2,715.3 1506.7,708.0 C1500.2,700.7 1489.3,684.3 1482.0,674.0 C1474.7,663.7 1459.8,642.8 1451.7,631.0 C1443.6,619.2 1429.1,597.3 1421.0,585.6 C1412.9,573.9 1398.1,553.7 1390.6,543.0 C1383.1,532.3 1371.1,513.4 1365.0,505.0 C1358.9,496.6 1350.2,485.5 1345.0,480.0 C1339.8,474.5 1333.3,467.3 1326.0,464.0 C1318.7,460.7 1297.5,458.2 1290.0,455.0 C1282.5,451.8 1277.0,445.3 1270.0,440.0 C1263.0,434.7 1245.2,420.3 1237.5,415.0 C1229.8,409.7 1220.8,405.3 1212.5,400.0 C1204.2,394.7 1185.0,380.7 1175.0,375.0 C1165.0,369.3 1147.5,359.8 1137.5,357.5 C1127.5,355.2 1110.0,354.7 1100.0,358.0 C1090.0,361.3 1071.6,378.0 1062.5,382.5 C1053.4,387.0 1042.0,389.6 1032.0,392.0 C1022.0,394.4 1000.5,396.0 987.4,400.7 C974.3,405.4 946.6,419.9 934.0,427.4 C921.4,434.9 902.1,449.1 892.6,457.0 C883.1,464.9 870.1,478.0 863.0,486.7 C855.9,495.4 844.1,512.5 839.0,522.0 C833.9,531.5 828.3,545.9 824.4,557.8 C820.5,569.7 812.8,596.8 809.6,611.0 C806.4,625.2 802.2,649.2 800.7,664.4 C799.2,679.6 797.7,711.2 798.0,725.0 C798.3,738.8 801.4,756.7 803.0,768.0 C804.6,779.3 807.7,799.1 810.0,810.0 C812.3,820.9 817.3,839.3 820.0,850.0 C822.7,860.7 827.1,878.0 830.0,890.0 C832.9,902.0 839.6,927.6 842.0,940.0 C844.4,952.4 846.9,972.6 848.0,983.0 C849.1,993.4 849.9,1010.4 850.0,1018.0 C850.1,1025.6 849.9,1035.5 849.0,1040.0 C848.1,1044.5 845.5,1049.7 843.0,1052.0 C840.5,1054.3 833.7,1056.2 830.0,1057.0 C826.3,1057.8 829.8,1057.9 815.0,1058.0 C800.2,1058.1 733.0,1058.7 719.0,1058.0 Z" fill="#5f7d6c"/>
<g clip-path="url(#couter)">
<path d="M760,1058 C740,900 720,700 760,540 C800,420 900,330 1050,300 C1200,300 1330,380 1420,500 C1480,600 1540,700 1590,740" fill="none" stroke="#6a8878" stroke-width="40" opacity="0.35" filter="url(#b12)"/>

<path d="M1482.0,674.0 C1478.0,668.3 1459.8,642.8 1451.7,631.0 C1443.6,619.2 1429.1,597.3 1421.0,585.6 C1412.9,573.9 1398.1,553.7 1390.6,543.0 C1383.1,532.3 1371.1,513.4 1365.0,505.0 C1358.9,496.6 1350.2,485.5 1345.0,480.0 C1339.8,474.5 1333.3,467.3 1326.0,464.0 C1318.7,460.7 1297.5,458.2 1290.0,455.0 C1282.5,451.8 1277.0,445.3 1270.0,440.0 C1263.0,434.7 1245.2,420.3 1237.5,415.0 C1229.8,409.7 1220.8,405.3 1212.5,400.0 C1204.2,394.7 1185.0,380.7 1175.0,375.0 C1165.0,369.3 1147.5,359.8 1137.5,357.5 C1127.5,355.2 1110.0,354.7 1100.0,358.0 C1090.0,361.3 1071.6,378.0 1062.5,382.5 C1053.4,387.0 1042.0,389.6 1032.0,392.0 C1022.0,394.4 1000.5,396.0 987.4,400.7 C974.3,405.4 946.6,419.9 934.0,427.4 C921.4,434.9 902.1,449.1 892.6,457.0 C883.1,464.9 870.1,478.0 863.0,486.7 C855.9,495.4 842.2,517.3 839.0,522.0" fill="none" stroke="#34483e" stroke-width="14" opacity="0.55" filter="url(#b4)"/>
</g>
<path d="M719.0,1058.0 C705.0,1057.3 713.5,1055.8 710.0,1053.0 C706.5,1050.2 697.5,1042.6 692.8,1037.0 C688.1,1031.4 679.7,1018.9 675.0,1010.7 C670.3,1002.5 661.3,984.2 657.6,975.6 C653.9,967.0 648.4,953.0 647.0,946.0 C645.6,939.0 646.5,929.1 647.0,923.0 C647.5,916.9 651.5,907.4 650.6,900.0 C649.7,892.6 642.3,881.5 640.4,867.4 C638.5,853.3 635.8,809.3 636.3,794.0 C636.8,778.7 644.1,767.1 644.4,753.0 C644.7,738.9 638.8,702.1 638.3,688.0 C637.8,673.9 639.0,657.7 640.4,647.4 C641.8,637.1 646.6,622.1 648.5,610.7 C650.4,599.3 653.2,575.0 654.6,562.0 C656.0,549.0 654.1,523.9 658.7,513.0 C663.3,502.1 683.3,487.1 689.0,480.0 C694.7,472.9 697.4,464.7 701.5,460.0 C705.6,455.3 716.9,450.3 720.0,445.0 C723.1,439.7 722.7,427.3 725.0,420.0 C727.3,412.7 731.5,398.0 737.5,390.0 C743.5,382.0 764.3,365.3 770.0,360.0 C775.7,354.7 775.3,355.0 780.0,350.0 C784.7,345.0 800.3,328.2 805.0,322.5 C809.7,316.8 809.0,312.5 815.0,307.5 C821.0,302.5 838.7,291.0 850.0,285.0 C861.3,279.0 888.0,267.8 900.0,262.5 C912.0,257.2 930.0,249.7 940.0,245.0 C950.0,240.3 965.3,231.5 975.0,227.5 C984.7,223.5 1002.5,217.9 1012.5,215.0 C1022.5,212.1 1041.7,207.0 1050.0,206.0 C1058.3,205.0 1069.0,206.3 1075.0,207.5 C1081.0,208.7 1090.0,214.0 1095.0,215.0 C1100.0,216.0 1105.2,216.2 1112.5,215.0 C1119.8,213.8 1141.7,206.8 1150.0,206.0 C1158.3,205.2 1167.7,207.1 1175.0,209.0 C1182.3,210.9 1197.0,215.9 1205.0,220.0 C1213.0,224.1 1227.0,237.0 1235.0,240.0 C1243.0,243.0 1257.7,243.0 1265.0,242.5 C1272.3,242.0 1282.7,236.3 1290.0,236.0 C1297.3,235.7 1312.0,236.8 1320.0,240.0 C1328.0,243.2 1343.3,254.0 1350.0,260.0 C1356.7,266.0 1366.3,279.3 1370.0,285.0 C1373.7,290.7 1375.8,296.8 1377.5,302.5 C1379.2,308.2 1378.5,324.8 1382.5,327.5 C1386.5,330.2 1402.5,323.2 1407.5,322.5 C1412.5,321.8 1415.0,321.2 1420.0,322.5 C1425.0,323.8 1439.0,328.2 1445.0,332.5 C1451.0,336.8 1460.7,348.3 1465.0,355.0 C1469.3,361.7 1475.5,375.8 1477.5,382.5 C1479.5,389.2 1477.3,400.3 1480.0,405.0 C1482.7,409.7 1492.5,415.8 1497.5,417.5 C1502.5,419.2 1511.5,415.8 1517.5,417.5 C1523.5,419.2 1536.8,425.7 1542.5,430.0 C1548.2,434.3 1557.0,443.3 1560.0,450.0 C1563.0,456.7 1560.7,473.3 1565.0,480.0 C1569.3,486.7 1585.2,495.3 1592.5,500.0 C1599.8,504.7 1613.5,509.7 1620.0,515.0 C1626.5,520.3 1634.9,531.4 1641.0,540.0 C1647.1,548.6 1660.7,569.4 1665.6,579.5 C1670.5,589.6 1676.3,607.0 1678.0,616.0 C1679.7,625.0 1679.2,639.4 1678.0,646.7 C1676.8,654.0 1672.4,664.5 1668.7,671.0 C1665.0,677.5 1655.3,690.3 1650.0,695.6 C1644.7,700.9 1634.3,707.3 1629.0,711.0 C1623.7,714.7 1616.3,719.8 1610.6,723.0 C1604.9,726.2 1593.3,733.0 1586.0,735.0 C1578.7,737.0 1562.9,738.8 1555.6,738.0 C1548.3,737.2 1537.5,733.0 1531.0,729.0 C1524.5,725.0 1513.2,715.3 1506.7,708.0 C1500.2,700.7 1489.3,684.3 1482.0,674.0 C1474.7,663.7 1459.8,642.8 1451.7,631.0 C1443.6,619.2 1429.1,597.3 1421.0,585.6 C1412.9,573.9 1398.1,553.7 1390.6,543.0 C1383.1,532.3 1371.1,513.4 1365.0,505.0 C1358.9,496.6 1350.2,485.5 1345.0,480.0 C1339.8,474.5 1333.3,467.3 1326.0,464.0 C1318.7,460.7 1297.5,458.2 1290.0,455.0 C1282.5,451.8 1277.0,445.3 1270.0,440.0 C1263.0,434.7 1245.2,420.3 1237.5,415.0 C1229.8,409.7 1220.8,405.3 1212.5,400.0 C1204.2,394.7 1185.0,380.7 1175.0,375.0 C1165.0,369.3 1147.5,359.8 1137.5,357.5 C1127.5,355.2 1110.0,354.7 1100.0,358.0 C1090.0,361.3 1071.6,378.0 1062.5,382.5 C1053.4,387.0 1042.0,389.6 1032.0,392.0 C1022.0,394.4 1000.5,396.0 987.4,400.7 C974.3,405.4 946.6,419.9 934.0,427.4 C921.4,434.9 902.1,449.1 892.6,457.0 C883.1,464.9 870.1,478.0 863.0,486.7 C855.9,495.4 844.1,512.5 839.0,522.0 C833.9,531.5 828.3,545.9 824.4,557.8 C820.5,569.7 812.8,596.8 809.6,611.0 C806.4,625.2 802.2,649.2 800.7,664.4 C799.2,679.6 797.7,711.2 798.0,725.0 C798.3,738.8 801.4,756.7 803.0,768.0 C804.6,779.3 807.7,799.1 810.0,810.0 C812.3,820.9 817.3,839.3 820.0,850.0 C822.7,860.7 827.1,878.0 830.0,890.0 C832.9,902.0 839.6,927.6 842.0,940.0 C844.4,952.4 846.9,972.6 848.0,983.0 C849.1,993.4 849.9,1010.4 850.0,1018.0 C850.1,1025.6 849.9,1035.5 849.0,1040.0 C848.1,1044.5 845.5,1049.7 843.0,1052.0 C840.5,1054.3 833.7,1056.2 830.0,1057.0 C826.3,1057.8 829.8,1057.9 815.0,1058.0 C800.2,1058.1 733.0,1058.7 719.0,1058.0 Z" fill="none" stroke="#2e3d35" stroke-width="1.2"/>
<path d="M647.0,923.0 C648.3,914.0 647.8,899.2 655.0,892.0 C662.2,884.8 675.8,882.5 690.0,880.0 C704.2,877.5 723.3,876.2 740.0,877.0 C756.7,877.8 777.5,880.3 790.0,885.0 C802.5,889.7 809.3,895.8 815.0,905.0 C820.7,914.2 822.7,926.7 824.0,940.0 C825.3,953.3 824.8,970.3 823.0,985.0 C821.2,999.7 817.2,1018.2 813.0,1028.0 C808.8,1037.8 804.3,1039.8 798.0,1044.0 C791.7,1048.2 784.0,1050.8 775.0,1053.0 C766.0,1055.2 753.3,1056.3 744.0,1057.0 C734.7,1057.7 724.7,1057.7 719.0,1057.0 C713.3,1056.3 714.4,1056.3 710.0,1053.0 C705.6,1049.7 698.6,1044.0 692.8,1037.0 C687.0,1030.0 680.9,1020.9 675.0,1010.7 C669.1,1000.5 662.3,986.4 657.6,975.6 C652.9,964.8 648.8,954.8 647.0,946.0 C645.2,937.2 645.7,932.0 647.0,923.0 Z" fill="url(#gt1)"/>
<g clip-path="url(#ct1)">
<path d="M647.0,923.0 C648.3,914.0 647.8,899.2 655.0,892.0 C662.2,884.8 675.8,882.5 690.0,880.0 C704.2,877.5 723.3,876.2 740.0,877.0 C756.7,877.8 777.5,880.3 790.0,885.0 C802.5,889.7 809.3,895.8 815.0,905.0 C820.7,914.2 822.7,926.7 824.0,940.0 C825.3,953.3 824.8,970.3 823.0,985.0 C821.2,999.7 817.2,1018.2 813.0,1028.0 C808.8,1037.8 804.3,1039.8 798.0,1044.0 C791.7,1048.2 784.0,1050.8 775.0,1053.0 C766.0,1055.2 753.3,1056.3 744.0,1057.0 C734.7,1057.7 724.7,1057.7 719.0,1057.0 C713.3,1056.3 714.4,1056.3 710.0,1053.0 C705.6,1049.7 698.6,1044.0 692.8,1037.0 C687.0,1030.0 680.9,1020.9 675.0,1010.7 C669.1,1000.5 662.3,986.4 657.6,975.6 C652.9,964.8 648.8,954.8 647.0,946.0 C645.2,937.2 645.7,932.0 647.0,923.0 Z" fill="none" stroke="#3c5046" stroke-width="16" filter="url(#b7)" opacity="0.9"/>
<path d="M720,912 C722,930 724,945 724,958 C728,970 731,978 733,982 C737,990 741,996 743,1002 C742,1012 741,1018 740,1025 C738,1032 736,1036 734,1040" fill="none" stroke="#3a4d43" stroke-linecap="round" stroke-width="1.3"/><path d="M684,973 C690,968 694,966 698,965 C710,962 718,961 724,960" fill="none" stroke="#3a4d43" stroke-linecap="round" stroke-width="1.2"/><path d="M743,1002 C750,999 756,997 762,995 C770,991 777,987 783,984" fill="none" stroke="#3a4d43" stroke-linecap="round" stroke-width="1.2"/><path d="M693,990 C698,1005 702,1015 706,1020" fill="none" stroke="#a8d2be" stroke-linecap="round" filter="url(#b1)" stroke-width="2" opacity=".7"/><path d="M790,1010 C788,1020 780,1025 772,1026" fill="none" stroke="#a8d2be" stroke-linecap="round" filter="url(#b1)" stroke-width="2" opacity=".7"/>
</g>
<path d="M647.0,923.0 C648.3,914.0 647.8,899.2 655.0,892.0 C662.2,884.8 675.8,882.5 690.0,880.0 C704.2,877.5 723.3,876.2 740.0,877.0 C756.7,877.8 777.5,880.3 790.0,885.0 C802.5,889.7 809.3,895.8 815.0,905.0 C820.7,914.2 822.7,926.7 824.0,940.0 C825.3,953.3 824.8,970.3 823.0,985.0 C821.2,999.7 817.2,1018.2 813.0,1028.0 C808.8,1037.8 804.3,1039.8 798.0,1044.0 C791.7,1048.2 784.0,1050.8 775.0,1053.0 C766.0,1055.2 753.3,1056.3 744.0,1057.0 C734.7,1057.7 724.7,1057.7 719.0,1057.0 C713.3,1056.3 714.4,1056.3 710.0,1053.0 C705.6,1049.7 698.6,1044.0 692.8,1037.0 C687.0,1030.0 680.9,1020.9 675.0,1010.7 C669.1,1000.5 662.3,986.4 657.6,975.6 C652.9,964.8 648.8,954.8 647.0,946.0 C645.2,937.2 645.7,932.0 647.0,923.0 Z" fill="none" stroke="#2f3d36" stroke-width="1.1"/>
<path d="M636.3,806.0 C639.4,797.2 647.2,781.5 656.7,773.7 C666.2,766.0 679.1,761.9 693.3,759.5 C707.5,757.1 728.4,756.5 742.0,759.5 C755.6,762.5 766.0,769.3 774.8,777.8 C783.6,786.3 792.3,799.5 795.0,810.4 C797.7,821.3 795.7,834.2 791.0,843.0 C786.3,851.8 777.5,857.6 766.7,863.0 C755.9,868.4 740.3,874.2 726.0,875.6 C711.7,877.0 693.2,875.6 681.0,871.5 C668.8,867.4 659.7,858.5 652.6,851.0 C645.5,843.5 641.0,834.2 638.3,826.7 C635.6,819.2 633.2,814.8 636.3,806.0 Z" fill="url(#gt12)"/>
<g clip-path="url(#ct12)">
<path d="M636.3,806.0 C639.4,797.2 647.2,781.5 656.7,773.7 C666.2,766.0 679.1,761.9 693.3,759.5 C707.5,757.1 728.4,756.5 742.0,759.5 C755.6,762.5 766.0,769.3 774.8,777.8 C783.6,786.3 792.3,799.5 795.0,810.4 C797.7,821.3 795.7,834.2 791.0,843.0 C786.3,851.8 777.5,857.6 766.7,863.0 C755.9,868.4 740.3,874.2 726.0,875.6 C711.7,877.0 693.2,875.6 681.0,871.5 C668.8,867.4 659.7,858.5 652.6,851.0 C645.5,843.5 641.0,834.2 638.3,826.7 C635.6,819.2 633.2,814.8 636.3,806.0 Z" fill="none" stroke="#3c5046" stroke-width="16" filter="url(#b7)" opacity="0.9"/>
<ellipse cx="762" cy="808" rx="26" ry="32" fill="#8db0a0" opacity=".45" filter="url(#b7)"/><path d="M697,768 C710,790 722,808 730,832" fill="none" stroke="#3a4d43" stroke-linecap="round" stroke-width="8" opacity=".4" filter="url(#b4)"/><path d="M750,794 C760,798 768,802 775,806" fill="none" stroke="#a8d2be" stroke-linecap="round" filter="url(#b1)" stroke-width="3" opacity=".85"/><path d="M745,832 C752,840 760,845 768,848" fill="none" stroke="#a8d2be" stroke-linecap="round" filter="url(#b1)" stroke-width="2" opacity=".6"/>
</g>
<path d="M636.3,806.0 C639.4,797.2 647.2,781.5 656.7,773.7 C666.2,766.0 679.1,761.9 693.3,759.5 C707.5,757.1 728.4,756.5 742.0,759.5 C755.6,762.5 766.0,769.3 774.8,777.8 C783.6,786.3 792.3,799.5 795.0,810.4 C797.7,821.3 795.7,834.2 791.0,843.0 C786.3,851.8 777.5,857.6 766.7,863.0 C755.9,868.4 740.3,874.2 726.0,875.6 C711.7,877.0 693.2,875.6 681.0,871.5 C668.8,867.4 659.7,858.5 652.6,851.0 C645.5,843.5 641.0,834.2 638.3,826.7 C635.6,819.2 633.2,814.8 636.3,806.0 Z" fill="none" stroke="#2f3d36" stroke-width="1.1"/>
<path d="M640.4,672.0 C645.2,659.7 657.5,646.5 669.0,639.0 C680.5,631.5 697.4,627.0 709.6,627.0 C721.8,627.0 731.1,634.9 742.0,639.0 C752.9,643.1 766.0,643.3 774.8,651.5 C783.6,659.7 792.3,676.5 795.0,688.0 C797.7,699.5 794.4,711.9 791.0,720.7 C787.6,729.5 783.6,735.6 774.8,741.0 C766.0,746.4 753.0,750.3 738.0,753.0 C723.0,755.7 699.2,758.7 685.0,757.4 C670.8,756.1 660.0,752.5 652.6,745.0 C645.2,737.5 642.4,724.8 640.4,712.6 C638.4,700.4 635.6,684.3 640.4,672.0 Z" fill="url(#gt11)"/>
<g clip-path="url(#ct11)">
<path d="M640.4,672.0 C645.2,659.7 657.5,646.5 669.0,639.0 C680.5,631.5 697.4,627.0 709.6,627.0 C721.8,627.0 731.1,634.9 742.0,639.0 C752.9,643.1 766.0,643.3 774.8,651.5 C783.6,659.7 792.3,676.5 795.0,688.0 C797.7,699.5 794.4,711.9 791.0,720.7 C787.6,729.5 783.6,735.6 774.8,741.0 C766.0,746.4 753.0,750.3 738.0,753.0 C723.0,755.7 699.2,758.7 685.0,757.4 C670.8,756.1 660.0,752.5 652.6,745.0 C645.2,737.5 642.4,724.8 640.4,712.6 C638.4,700.4 635.6,684.3 640.4,672.0 Z" fill="none" stroke="#3c5046" stroke-width="16" filter="url(#b7)" opacity="0.9"/>
<ellipse cx="758" cy="692" rx="30" ry="38" fill="#8db0a0" opacity=".45" filter="url(#b7)"/><path d="M705,648 C702,675 694,710 680,744 M700,690 C712,705 725,720 738,732" fill="none" stroke="#3a4d43" stroke-linecap="round" stroke-width="10" opacity=".6" filter="url(#b4)"/><path d="M705,648 C702,675 694,710 680,744" fill="none" stroke="#3a4d43" stroke-linecap="round" stroke-width="1.1" opacity=".45"/><path d="M728,675 C745,672 760,680 768,690 C775,700 782,705 787,708" fill="none" stroke="#a8d2be" stroke-linecap="round" filter="url(#b1)" stroke-width="2.6" opacity=".8"/><path d="M745,722 C752,728 758,733 764,737" fill="none" stroke="#a8d2be" stroke-linecap="round" filter="url(#b1)" stroke-width="2" opacity=".7"/><path d="M690,690 C686,705 684,720 686,735" fill="none" stroke="#a8d2be" stroke-linecap="round" filter="url(#b1)" stroke-width="1.8" opacity=".55"/>
</g>
<path d="M640.4,672.0 C645.2,659.7 657.5,646.5 669.0,639.0 C680.5,631.5 697.4,627.0 709.6,627.0 C721.8,627.0 731.1,634.9 742.0,639.0 C752.9,643.1 766.0,643.3 774.8,651.5 C783.6,659.7 792.3,676.5 795.0,688.0 C797.7,699.5 794.4,711.9 791.0,720.7 C787.6,729.5 783.6,735.6 774.8,741.0 C766.0,746.4 753.0,750.3 738.0,753.0 C723.0,755.7 699.2,758.7 685.0,757.4 C670.8,756.1 660.0,752.5 652.6,745.0 C645.2,737.5 642.4,724.8 640.4,712.6 C638.4,700.4 635.6,684.3 640.4,672.0 Z" fill="none" stroke="#2f3d36" stroke-width="1.1"/>
<path d="M660.7,517.0 C665.4,506.8 672.8,490.9 685.0,484.4 C697.2,477.9 720.4,476.6 734.0,478.0 C747.6,479.4 755.9,483.4 766.7,492.6 C777.5,501.8 791.5,520.8 799.0,533.0 C806.5,545.2 811.5,556.5 811.5,566.0 C811.5,575.5 806.5,584.6 799.0,590.0 C791.5,595.4 776.2,595.7 766.7,598.5 C757.2,601.3 750.8,602.6 742.0,606.7 C733.2,610.8 723.2,621.6 713.7,623.0 C704.2,624.4 693.8,621.6 685.0,614.8 C676.2,608.0 665.4,593.5 660.7,582.0 C656.0,570.5 656.7,556.4 656.7,545.6 C656.7,534.8 656.0,527.2 660.7,517.0 Z" fill="url(#gt10)"/>
<g clip-path="url(#ct10)">
<path d="M660.7,517.0 C665.4,506.8 672.8,490.9 685.0,484.4 C697.2,477.9 720.4,476.6 734.0,478.0 C747.6,479.4 755.9,483.4 766.7,492.6 C777.5,501.8 791.5,520.8 799.0,533.0 C806.5,545.2 811.5,556.5 811.5,566.0 C811.5,575.5 806.5,584.6 799.0,590.0 C791.5,595.4 776.2,595.7 766.7,598.5 C757.2,601.3 750.8,602.6 742.0,606.7 C733.2,610.8 723.2,621.6 713.7,623.0 C704.2,624.4 693.8,621.6 685.0,614.8 C676.2,608.0 665.4,593.5 660.7,582.0 C656.0,570.5 656.7,556.4 656.7,545.6 C656.7,534.8 656.0,527.2 660.7,517.0 Z" fill="none" stroke="#3c5046" stroke-width="16" filter="url(#b7)" opacity="0.9"/>
<ellipse cx="778" cy="552" rx="26" ry="38" fill="#8aab9b" opacity=".4" filter="url(#b7)"/><path d="M735,497 C738,520 737,550 732,582" fill="none" stroke="#3a4d43" stroke-linecap="round" stroke-width="9" opacity=".45" filter="url(#b4)"/><path d="M735,497 C738,520 737,550 732,582" fill="none" stroke="#3a4d43" stroke-linecap="round" stroke-width="1.2" opacity=".5"/><path d="M718,541 C714,550 708,560 706,566" fill="none" stroke="#a8d2be" stroke-linecap="round" filter="url(#b1)" stroke-width="2.2" opacity=".8"/>
</g>
<path d="M660.7,517.0 C665.4,506.8 672.8,490.9 685.0,484.4 C697.2,477.9 720.4,476.6 734.0,478.0 C747.6,479.4 755.9,483.4 766.7,492.6 C777.5,501.8 791.5,520.8 799.0,533.0 C806.5,545.2 811.5,556.5 811.5,566.0 C811.5,575.5 806.5,584.6 799.0,590.0 C791.5,595.4 776.2,595.7 766.7,598.5 C757.2,601.3 750.8,602.6 742.0,606.7 C733.2,610.8 723.2,621.6 713.7,623.0 C704.2,624.4 693.8,621.6 685.0,614.8 C676.2,608.0 665.4,593.5 660.7,582.0 C656.0,570.5 656.7,556.4 656.7,545.6 C656.7,534.8 656.0,527.2 660.7,517.0 Z" fill="none" stroke="#2f3d36" stroke-width="1.1"/>
<path d="M740.0,390.0 C747.5,382.1 760.0,367.5 770.0,362.5 C780.0,357.5 791.7,357.9 800.0,360.0 C808.3,362.1 814.2,369.2 820.0,375.0 C825.8,380.8 831.2,386.7 835.0,395.0 C838.8,403.3 841.7,415.0 842.5,425.0 C843.3,435.0 842.9,445.8 840.0,455.0 C837.1,464.2 833.3,473.8 825.0,480.0 C816.7,486.2 801.7,491.2 790.0,492.5 C778.3,493.8 765.0,491.2 755.0,487.5 C745.0,483.8 735.4,477.9 730.0,470.0 C724.6,462.1 723.3,450.0 722.5,440.0 C721.7,430.0 722.1,418.3 725.0,410.0 C727.9,401.7 732.5,397.9 740.0,390.0 Z" fill="url(#gt2)"/>
<g clip-path="url(#ct2)">
<path d="M740.0,390.0 C747.5,382.1 760.0,367.5 770.0,362.5 C780.0,357.5 791.7,357.9 800.0,360.0 C808.3,362.1 814.2,369.2 820.0,375.0 C825.8,380.8 831.2,386.7 835.0,395.0 C838.8,403.3 841.7,415.0 842.5,425.0 C843.3,435.0 842.9,445.8 840.0,455.0 C837.1,464.2 833.3,473.8 825.0,480.0 C816.7,486.2 801.7,491.2 790.0,492.5 C778.3,493.8 765.0,491.2 755.0,487.5 C745.0,483.8 735.4,477.9 730.0,470.0 C724.6,462.1 723.3,450.0 722.5,440.0 C721.7,430.0 722.1,418.3 725.0,410.0 C727.9,401.7 732.5,397.9 740.0,390.0 Z" fill="none" stroke="#3c5046" stroke-width="16" filter="url(#b7)" opacity="0.9"/>
<path d="M815,383 C800,410 780,440 765,468" fill="none" stroke="#3a4d43" stroke-linecap="round" stroke-width="10" opacity=".45" filter="url(#b4)"/><path d="M805,390 C790,415 765,440 745,455" fill="none" stroke="#a8d2be" stroke-linecap="round" filter="url(#b1)" stroke-width="2.2" opacity=".8"/>
</g>
<path d="M740.0,390.0 C747.5,382.1 760.0,367.5 770.0,362.5 C780.0,357.5 791.7,357.9 800.0,360.0 C808.3,362.1 814.2,369.2 820.0,375.0 C825.8,380.8 831.2,386.7 835.0,395.0 C838.8,403.3 841.7,415.0 842.5,425.0 C843.3,435.0 842.9,445.8 840.0,455.0 C837.1,464.2 833.3,473.8 825.0,480.0 C816.7,486.2 801.7,491.2 790.0,492.5 C778.3,493.8 765.0,491.2 755.0,487.5 C745.0,483.8 735.4,477.9 730.0,470.0 C724.6,462.1 723.3,450.0 722.5,440.0 C721.7,430.0 722.1,418.3 725.0,410.0 C727.9,401.7 732.5,397.9 740.0,390.0 Z" fill="none" stroke="#2f3d36" stroke-width="1.1"/>
<path d="M807.5,330.0 C808.8,323.3 807.9,317.1 815.0,310.0 C822.1,302.9 835.8,295.4 850.0,287.5 C864.2,279.6 886.7,267.5 900.0,262.5 C913.3,257.5 921.7,256.7 930.0,257.5 C938.3,258.3 945.0,261.2 950.0,267.5 C955.0,273.8 958.3,282.9 960.0,295.0 C961.7,307.1 961.7,326.7 960.0,340.0 C958.3,353.3 955.8,365.0 950.0,375.0 C944.2,385.0 934.2,394.6 925.0,400.0 C915.8,405.4 906.7,407.9 895.0,407.5 C883.3,407.1 867.5,402.9 855.0,397.5 C842.5,392.1 827.9,382.9 820.0,375.0 C812.1,367.1 809.6,357.5 807.5,350.0 C805.4,342.5 806.2,336.7 807.5,330.0 Z" fill="url(#gt3)"/>
<g clip-path="url(#ct3)">
<path d="M807.5,330.0 C808.8,323.3 807.9,317.1 815.0,310.0 C822.1,302.9 835.8,295.4 850.0,287.5 C864.2,279.6 886.7,267.5 900.0,262.5 C913.3,257.5 921.7,256.7 930.0,257.5 C938.3,258.3 945.0,261.2 950.0,267.5 C955.0,273.8 958.3,282.9 960.0,295.0 C961.7,307.1 961.7,326.7 960.0,340.0 C958.3,353.3 955.8,365.0 950.0,375.0 C944.2,385.0 934.2,394.6 925.0,400.0 C915.8,405.4 906.7,407.9 895.0,407.5 C883.3,407.1 867.5,402.9 855.0,397.5 C842.5,392.1 827.9,382.9 820.0,375.0 C812.1,367.1 809.6,357.5 807.5,350.0 C805.4,342.5 806.2,336.7 807.5,330.0 Z" fill="none" stroke="#3c5046" stroke-width="16" filter="url(#b7)" opacity="0.9"/>
<path d="M955,305 C920,320 870,335 825,355" fill="none" stroke="#3a4d43" stroke-linecap="round" stroke-width="12" opacity=".4" filter="url(#b4)"/><path d="M942,292 C915,300 880,315 855,335 C845,342 835,350 830,352" fill="none" stroke="#a8d2be" stroke-linecap="round" filter="url(#b1)" stroke-width="2.2" opacity=".85"/>
</g>
<path d="M807.5,330.0 C808.8,323.3 807.9,317.1 815.0,310.0 C822.1,302.9 835.8,295.4 850.0,287.5 C864.2,279.6 886.7,267.5 900.0,262.5 C913.3,257.5 921.7,256.7 930.0,257.5 C938.3,258.3 945.0,261.2 950.0,267.5 C955.0,273.8 958.3,282.9 960.0,295.0 C961.7,307.1 961.7,326.7 960.0,340.0 C958.3,353.3 955.8,365.0 950.0,375.0 C944.2,385.0 934.2,394.6 925.0,400.0 C915.8,405.4 906.7,407.9 895.0,407.5 C883.3,407.1 867.5,402.9 855.0,397.5 C842.5,392.1 827.9,382.9 820.0,375.0 C812.1,367.1 809.6,357.5 807.5,350.0 C805.4,342.5 806.2,336.7 807.5,330.0 Z" fill="none" stroke="#2f3d36" stroke-width="1.1"/>
<path d="M950.0,250.0 C954.2,242.9 962.5,234.2 975.0,227.5 C987.5,220.8 1010.4,213.6 1025.0,210.0 C1039.6,206.4 1050.8,204.8 1062.5,206.0 C1074.2,207.2 1087.5,212.7 1095.0,217.5 C1102.5,222.3 1105.2,227.1 1107.5,235.0 C1109.8,242.9 1110.0,255.0 1108.8,265.0 C1107.5,275.0 1104.8,285.8 1100.0,295.0 C1095.2,304.2 1085.8,313.3 1080.0,320.0 C1074.2,326.7 1072.1,333.3 1065.0,335.0 C1057.9,336.7 1046.2,331.7 1037.5,330.0 C1028.8,328.3 1019.2,323.8 1012.5,325.0 C1005.8,326.2 1003.8,338.3 997.5,337.5 C991.2,336.7 980.8,327.1 975.0,320.0 C969.2,312.9 966.7,303.3 962.5,295.0 C958.3,286.7 952.1,277.5 950.0,270.0 C947.9,262.5 945.8,257.1 950.0,250.0 Z" fill="url(#gt4)"/>
<g clip-path="url(#ct4)">
<path d="M950.0,250.0 C954.2,242.9 962.5,234.2 975.0,227.5 C987.5,220.8 1010.4,213.6 1025.0,210.0 C1039.6,206.4 1050.8,204.8 1062.5,206.0 C1074.2,207.2 1087.5,212.7 1095.0,217.5 C1102.5,222.3 1105.2,227.1 1107.5,235.0 C1109.8,242.9 1110.0,255.0 1108.8,265.0 C1107.5,275.0 1104.8,285.8 1100.0,295.0 C1095.2,304.2 1085.8,313.3 1080.0,320.0 C1074.2,326.7 1072.1,333.3 1065.0,335.0 C1057.9,336.7 1046.2,331.7 1037.5,330.0 C1028.8,328.3 1019.2,323.8 1012.5,325.0 C1005.8,326.2 1003.8,338.3 997.5,337.5 C991.2,336.7 980.8,327.1 975.0,320.0 C969.2,312.9 966.7,303.3 962.5,295.0 C958.3,286.7 952.1,277.5 950.0,270.0 C947.9,262.5 945.8,257.1 950.0,250.0 Z" fill="none" stroke="#3c5046" stroke-width="16" filter="url(#b7)" opacity="0.9"/>
<path d="M1100,255 C1060,270 1010,285 975,290" fill="none" stroke="#3a4d43" stroke-linecap="round" stroke-width="12" opacity=".35" filter="url(#b4)"/><path d="M1065,240 C1045,245 1025,250 975,270" fill="none" stroke="#a8d2be" stroke-linecap="round" filter="url(#b1)" stroke-width="2.2" opacity=".85"/>
</g>
<path d="M950.0,250.0 C954.2,242.9 962.5,234.2 975.0,227.5 C987.5,220.8 1010.4,213.6 1025.0,210.0 C1039.6,206.4 1050.8,204.8 1062.5,206.0 C1074.2,207.2 1087.5,212.7 1095.0,217.5 C1102.5,222.3 1105.2,227.1 1107.5,235.0 C1109.8,242.9 1110.0,255.0 1108.8,265.0 C1107.5,275.0 1104.8,285.8 1100.0,295.0 C1095.2,304.2 1085.8,313.3 1080.0,320.0 C1074.2,326.7 1072.1,333.3 1065.0,335.0 C1057.9,336.7 1046.2,331.7 1037.5,330.0 C1028.8,328.3 1019.2,323.8 1012.5,325.0 C1005.8,326.2 1003.8,338.3 997.5,337.5 C991.2,336.7 980.8,327.1 975.0,320.0 C969.2,312.9 966.7,303.3 962.5,295.0 C958.3,286.7 952.1,277.5 950.0,270.0 C947.9,262.5 945.8,257.1 950.0,250.0 Z" fill="none" stroke="#2f3d36" stroke-width="1.1"/>
<path d="M1110.0,235.0 C1111.7,226.2 1113.3,222.3 1120.0,217.5 C1126.7,212.7 1140.0,207.2 1150.0,206.0 C1160.0,204.8 1170.0,206.8 1180.0,210.0 C1190.0,213.2 1200.8,219.6 1210.0,225.0 C1219.2,230.4 1229.4,236.7 1235.0,242.5 C1240.6,248.3 1243.8,253.3 1243.8,260.0 C1243.8,266.7 1239.0,275.0 1235.0,282.5 C1231.0,290.0 1226.7,298.3 1220.0,305.0 C1213.3,311.7 1205.8,317.5 1195.0,322.5 C1184.2,327.5 1165.0,334.2 1155.0,335.0 C1145.0,335.8 1140.8,333.3 1135.0,327.5 C1129.2,321.7 1124.2,309.6 1120.0,300.0 C1115.8,290.4 1111.7,280.8 1110.0,270.0 C1108.3,259.2 1108.3,243.8 1110.0,235.0 Z" fill="url(#gt5)"/>
<g clip-path="url(#ct5)">
<path d="M1110.0,235.0 C1111.7,226.2 1113.3,222.3 1120.0,217.5 C1126.7,212.7 1140.0,207.2 1150.0,206.0 C1160.0,204.8 1170.0,206.8 1180.0,210.0 C1190.0,213.2 1200.8,219.6 1210.0,225.0 C1219.2,230.4 1229.4,236.7 1235.0,242.5 C1240.6,248.3 1243.8,253.3 1243.8,260.0 C1243.8,266.7 1239.0,275.0 1235.0,282.5 C1231.0,290.0 1226.7,298.3 1220.0,305.0 C1213.3,311.7 1205.8,317.5 1195.0,322.5 C1184.2,327.5 1165.0,334.2 1155.0,335.0 C1145.0,335.8 1140.8,333.3 1135.0,327.5 C1129.2,321.7 1124.2,309.6 1120.0,300.0 C1115.8,290.4 1111.7,280.8 1110.0,270.0 C1108.3,259.2 1108.3,243.8 1110.0,235.0 Z" fill="none" stroke="#3c5046" stroke-width="16" filter="url(#b7)" opacity="0.9"/>
<path d="M1142,235 C1155,234 1165,235 1172,236" fill="none" stroke="#a8d2be" stroke-linecap="round" filter="url(#b1)" stroke-width="2.2" opacity=".85"/>
</g>
<path d="M1110.0,235.0 C1111.7,226.2 1113.3,222.3 1120.0,217.5 C1126.7,212.7 1140.0,207.2 1150.0,206.0 C1160.0,204.8 1170.0,206.8 1180.0,210.0 C1190.0,213.2 1200.8,219.6 1210.0,225.0 C1219.2,230.4 1229.4,236.7 1235.0,242.5 C1240.6,248.3 1243.8,253.3 1243.8,260.0 C1243.8,266.7 1239.0,275.0 1235.0,282.5 C1231.0,290.0 1226.7,298.3 1220.0,305.0 C1213.3,311.7 1205.8,317.5 1195.0,322.5 C1184.2,327.5 1165.0,334.2 1155.0,335.0 C1145.0,335.8 1140.8,333.3 1135.0,327.5 C1129.2,321.7 1124.2,309.6 1120.0,300.0 C1115.8,290.4 1111.7,280.8 1110.0,270.0 C1108.3,259.2 1108.3,243.8 1110.0,235.0 Z" fill="none" stroke="#2f3d36" stroke-width="1.1"/>
<path d="M1230.0,290.0 C1233.8,277.1 1240.0,261.5 1250.0,252.5 C1260.0,243.5 1277.5,237.7 1290.0,236.0 C1302.5,234.3 1315.0,238.5 1325.0,242.5 C1335.0,246.5 1342.5,252.9 1350.0,260.0 C1357.5,267.1 1365.0,276.7 1370.0,285.0 C1375.0,293.3 1378.8,300.8 1380.0,310.0 C1381.2,319.2 1380.8,330.8 1377.5,340.0 C1374.2,349.2 1367.9,358.3 1360.0,365.0 C1352.1,371.7 1344.2,375.0 1330.0,380.0 C1315.8,385.0 1288.3,394.2 1275.0,395.0 C1261.7,395.8 1257.1,390.0 1250.0,385.0 C1242.9,380.0 1236.2,374.2 1232.5,365.0 C1228.8,355.8 1227.9,342.5 1227.5,330.0 C1227.1,317.5 1226.2,302.9 1230.0,290.0 Z" fill="url(#gt6)"/>
<g clip-path="url(#ct6)">
<path d="M1230.0,290.0 C1233.8,277.1 1240.0,261.5 1250.0,252.5 C1260.0,243.5 1277.5,237.7 1290.0,236.0 C1302.5,234.3 1315.0,238.5 1325.0,242.5 C1335.0,246.5 1342.5,252.9 1350.0,260.0 C1357.5,267.1 1365.0,276.7 1370.0,285.0 C1375.0,293.3 1378.8,300.8 1380.0,310.0 C1381.2,319.2 1380.8,330.8 1377.5,340.0 C1374.2,349.2 1367.9,358.3 1360.0,365.0 C1352.1,371.7 1344.2,375.0 1330.0,380.0 C1315.8,385.0 1288.3,394.2 1275.0,395.0 C1261.7,395.8 1257.1,390.0 1250.0,385.0 C1242.9,380.0 1236.2,374.2 1232.5,365.0 C1228.8,355.8 1227.9,342.5 1227.5,330.0 C1227.1,317.5 1226.2,302.9 1230.0,290.0 Z" fill="none" stroke="#3c5046" stroke-width="16" filter="url(#b7)" opacity="0.9"/>
<ellipse cx="1337" cy="312" rx="36" ry="24" fill="#87a897" opacity=".5" filter="url(#b7)"/><ellipse cx="1276" cy="332" rx="20" ry="32" fill="#435a4e" opacity=".35" filter="url(#b7)"/><path d="M1280,279 C1300,282 1315,285 1326,289" fill="none" stroke="#a8d2be" stroke-linecap="round" filter="url(#b1)" stroke-width="2" opacity=".85"/>
</g>
<path d="M1230.0,290.0 C1233.8,277.1 1240.0,261.5 1250.0,252.5 C1260.0,243.5 1277.5,237.7 1290.0,236.0 C1302.5,234.3 1315.0,238.5 1325.0,242.5 C1335.0,246.5 1342.5,252.9 1350.0,260.0 C1357.5,267.1 1365.0,276.7 1370.0,285.0 C1375.0,293.3 1378.8,300.8 1380.0,310.0 C1381.2,319.2 1380.8,330.8 1377.5,340.0 C1374.2,349.2 1367.9,358.3 1360.0,365.0 C1352.1,371.7 1344.2,375.0 1330.0,380.0 C1315.8,385.0 1288.3,394.2 1275.0,395.0 C1261.7,395.8 1257.1,390.0 1250.0,385.0 C1242.9,380.0 1236.2,374.2 1232.5,365.0 C1228.8,355.8 1227.9,342.5 1227.5,330.0 C1227.1,317.5 1226.2,302.9 1230.0,290.0 Z" fill="none" stroke="#2f3d36" stroke-width="1.1"/>
<path d="M1346.0,376.0 C1348.5,368.3 1364.5,345.8 1377.0,337.0 C1389.5,328.2 1407.3,321.5 1421.0,323.0 C1434.7,324.5 1449.5,335.3 1459.0,346.0 C1468.5,356.7 1474.3,374.8 1478.0,387.0 C1481.7,399.2 1483.2,409.5 1481.0,419.0 C1478.8,428.5 1472.3,436.7 1465.0,444.0 C1457.7,451.3 1447.4,457.2 1437.0,463.0 C1426.6,468.8 1413.5,477.6 1402.5,478.6 C1391.5,479.6 1380.4,474.3 1371.0,469.0 C1361.6,463.7 1351.2,453.0 1346.0,447.0 C1340.8,441.0 1336.3,437.0 1339.6,433.0 C1342.9,429.0 1360.4,428.5 1366.0,423.0 C1371.6,417.5 1373.7,406.7 1373.0,400.0 C1372.3,393.3 1366.5,387.0 1362.0,383.0 C1357.5,379.0 1343.5,383.7 1346.0,376.0 Z" fill="url(#gt7)"/>
<g clip-path="url(#ct7)">
<path d="M1346.0,376.0 C1348.5,368.3 1364.5,345.8 1377.0,337.0 C1389.5,328.2 1407.3,321.5 1421.0,323.0 C1434.7,324.5 1449.5,335.3 1459.0,346.0 C1468.5,356.7 1474.3,374.8 1478.0,387.0 C1481.7,399.2 1483.2,409.5 1481.0,419.0 C1478.8,428.5 1472.3,436.7 1465.0,444.0 C1457.7,451.3 1447.4,457.2 1437.0,463.0 C1426.6,468.8 1413.5,477.6 1402.5,478.6 C1391.5,479.6 1380.4,474.3 1371.0,469.0 C1361.6,463.7 1351.2,453.0 1346.0,447.0 C1340.8,441.0 1336.3,437.0 1339.6,433.0 C1342.9,429.0 1360.4,428.5 1366.0,423.0 C1371.6,417.5 1373.7,406.7 1373.0,400.0 C1372.3,393.3 1366.5,387.0 1362.0,383.0 C1357.5,379.0 1343.5,383.7 1346.0,376.0 Z" fill="none" stroke="#3c5046" stroke-width="16" filter="url(#b7)" opacity="0.9"/>
<ellipse cx="1440" cy="385" rx="28" ry="22" fill="#8aab9b" opacity=".4" filter="url(#b7)"/><path d="M1390,372 C1393,385 1396,400 1407,427 M1432,419 C1450,414 1462,410 1475,406" fill="none" stroke="#3a4d43" stroke-linecap="round" stroke-width="7" opacity=".45" filter="url(#b4)"/><path d="M1390,372 C1393,385 1396,400 1407,427" fill="none" stroke="#3a4d43" stroke-linecap="round" stroke-width="1.1" opacity=".5"/><path d="M1430,370 L1445,377" fill="none" stroke="#a8d2be" stroke-linecap="round" filter="url(#b1)" stroke-width="2.2" opacity=".8"/><path d="M1383,422 C1386,430 1388,438 1390,444" fill="none" stroke="#a8d2be" stroke-linecap="round" filter="url(#b1)" stroke-width="3" opacity=".9"/><path d="M1402,432 L1412,446" fill="none" stroke="#a8d2be" stroke-linecap="round" filter="url(#b1)" stroke-width="2.5" opacity=".8"/>
</g>
<path d="M1346.0,376.0 C1348.5,368.3 1364.5,345.8 1377.0,337.0 C1389.5,328.2 1407.3,321.5 1421.0,323.0 C1434.7,324.5 1449.5,335.3 1459.0,346.0 C1468.5,356.7 1474.3,374.8 1478.0,387.0 C1481.7,399.2 1483.2,409.5 1481.0,419.0 C1478.8,428.5 1472.3,436.7 1465.0,444.0 C1457.7,451.3 1447.4,457.2 1437.0,463.0 C1426.6,468.8 1413.5,477.6 1402.5,478.6 C1391.5,479.6 1380.4,474.3 1371.0,469.0 C1361.6,463.7 1351.2,453.0 1346.0,447.0 C1340.8,441.0 1336.3,437.0 1339.6,433.0 C1342.9,429.0 1360.4,428.5 1366.0,423.0 C1371.6,417.5 1373.7,406.7 1373.0,400.0 C1372.3,393.3 1366.5,387.0 1362.0,383.0 C1357.5,379.0 1343.5,383.7 1346.0,376.0 Z" fill="none" stroke="#2f3d36" stroke-width="1.1"/>
<path d="M1420.0,490.0 C1420.8,479.2 1426.7,470.0 1435.0,460.0 C1443.3,450.0 1458.3,437.1 1470.0,430.0 C1481.7,422.9 1495.0,418.8 1505.0,417.5 C1515.0,416.2 1522.5,418.8 1530.0,422.5 C1537.5,426.2 1544.6,432.9 1550.0,440.0 C1555.4,447.1 1559.6,455.0 1562.5,465.0 C1565.4,475.0 1568.8,490.0 1567.5,500.0 C1566.2,510.0 1561.2,518.3 1555.0,525.0 C1548.8,531.7 1538.3,535.8 1530.0,540.0 C1521.7,544.2 1512.1,546.7 1505.0,550.0 C1497.9,553.3 1495.8,560.0 1487.5,560.0 C1479.2,560.0 1464.6,555.8 1455.0,550.0 C1445.4,544.2 1435.8,535.0 1430.0,525.0 C1424.2,515.0 1419.2,500.8 1420.0,490.0 Z" fill="url(#gt8)"/>
<g clip-path="url(#ct8)">
<path d="M1420.0,490.0 C1420.8,479.2 1426.7,470.0 1435.0,460.0 C1443.3,450.0 1458.3,437.1 1470.0,430.0 C1481.7,422.9 1495.0,418.8 1505.0,417.5 C1515.0,416.2 1522.5,418.8 1530.0,422.5 C1537.5,426.2 1544.6,432.9 1550.0,440.0 C1555.4,447.1 1559.6,455.0 1562.5,465.0 C1565.4,475.0 1568.8,490.0 1567.5,500.0 C1566.2,510.0 1561.2,518.3 1555.0,525.0 C1548.8,531.7 1538.3,535.8 1530.0,540.0 C1521.7,544.2 1512.1,546.7 1505.0,550.0 C1497.9,553.3 1495.8,560.0 1487.5,560.0 C1479.2,560.0 1464.6,555.8 1455.0,550.0 C1445.4,544.2 1435.8,535.0 1430.0,525.0 C1424.2,515.0 1419.2,500.8 1420.0,490.0 Z" fill="none" stroke="#3c5046" stroke-width="16" filter="url(#b7)" opacity="0.9"/>
<ellipse cx="1515" cy="470" rx="30" ry="24" fill="#8aab9b" opacity=".4" filter="url(#b7)"/><path d="M1462,479 C1472,490 1480,505 1488,513 C1500,518 1510,521 1518,522 C1530,520 1542,516 1552,513 M1488,513 C1484,522 1482,530 1480,539" fill="none" stroke="#3a4d43" stroke-linecap="round" stroke-width="7" opacity=".45" filter="url(#b4)"/><path d="M1462,479 C1472,490 1480,505 1488,513 C1500,518 1510,521 1518,522 C1530,520 1542,516 1552,513" fill="none" stroke="#3a4d43" stroke-linecap="round" stroke-width="1.1" opacity=".5"/><path d="M1500,445 C1515,452 1525,458 1535,465" fill="none" stroke="#a8d2be" stroke-linecap="round" filter="url(#b1)" stroke-width="2.2" opacity=".8"/><path d="M1438,478 C1438,500 1446,528 1455,545" fill="none" stroke="#a8d2be" stroke-linecap="round" filter="url(#b1)" stroke-width="2" opacity=".7"/>
</g>
<path d="M1420.0,490.0 C1420.8,479.2 1426.7,470.0 1435.0,460.0 C1443.3,450.0 1458.3,437.1 1470.0,430.0 C1481.7,422.9 1495.0,418.8 1505.0,417.5 C1515.0,416.2 1522.5,418.8 1530.0,422.5 C1537.5,426.2 1544.6,432.9 1550.0,440.0 C1555.4,447.1 1559.6,455.0 1562.5,465.0 C1565.4,475.0 1568.8,490.0 1567.5,500.0 C1566.2,510.0 1561.2,518.3 1555.0,525.0 C1548.8,531.7 1538.3,535.8 1530.0,540.0 C1521.7,544.2 1512.1,546.7 1505.0,550.0 C1497.9,553.3 1495.8,560.0 1487.5,560.0 C1479.2,560.0 1464.6,555.8 1455.0,550.0 C1445.4,544.2 1435.8,535.0 1430.0,525.0 C1424.2,515.0 1419.2,500.8 1420.0,490.0 Z" fill="none" stroke="#2f3d36" stroke-width="1.1"/>
<path d="M1479.0,610.0 C1479.0,600.8 1479.3,600.3 1488.0,588.6 C1496.7,576.9 1517.7,552.0 1531.0,539.7 C1544.3,527.4 1556.8,520.4 1568.0,515.0 C1579.2,509.6 1588.8,507.1 1598.0,507.6 C1607.2,508.1 1615.8,512.6 1623.0,518.0 C1630.2,523.4 1634.4,531.0 1641.0,539.7 C1647.6,548.4 1656.4,558.3 1662.6,570.0 C1668.8,581.7 1675.4,597.7 1678.0,610.0 C1680.6,622.3 1680.1,633.4 1678.0,643.6 C1675.9,653.8 1670.8,663.4 1665.6,671.0 C1660.4,678.6 1653.1,683.3 1647.0,689.5 C1640.9,695.7 1637.2,703.4 1629.0,708.0 C1620.8,712.6 1607.2,716.0 1598.0,717.0 C1588.8,718.0 1583.2,717.6 1574.0,714.0 C1564.8,710.4 1553.2,702.8 1543.0,695.6 C1532.8,688.4 1522.2,679.7 1513.0,671.0 C1503.8,662.3 1493.7,653.8 1488.0,643.6 C1482.3,633.4 1479.0,619.2 1479.0,610.0 Z" fill="url(#gt9)"/>
<g clip-path="url(#ct9)">
<path d="M1479.0,610.0 C1479.0,600.8 1479.3,600.3 1488.0,588.6 C1496.7,576.9 1517.7,552.0 1531.0,539.7 C1544.3,527.4 1556.8,520.4 1568.0,515.0 C1579.2,509.6 1588.8,507.1 1598.0,507.6 C1607.2,508.1 1615.8,512.6 1623.0,518.0 C1630.2,523.4 1634.4,531.0 1641.0,539.7 C1647.6,548.4 1656.4,558.3 1662.6,570.0 C1668.8,581.7 1675.4,597.7 1678.0,610.0 C1680.6,622.3 1680.1,633.4 1678.0,643.6 C1675.9,653.8 1670.8,663.4 1665.6,671.0 C1660.4,678.6 1653.1,683.3 1647.0,689.5 C1640.9,695.7 1637.2,703.4 1629.0,708.0 C1620.8,712.6 1607.2,716.0 1598.0,717.0 C1588.8,718.0 1583.2,717.6 1574.0,714.0 C1564.8,710.4 1553.2,702.8 1543.0,695.6 C1532.8,688.4 1522.2,679.7 1513.0,671.0 C1503.8,662.3 1493.7,653.8 1488.0,643.6 C1482.3,633.4 1479.0,619.2 1479.0,610.0 Z" fill="none" stroke="#3c5046" stroke-width="16" filter="url(#b7)" opacity="0.9"/>
<path d="M1507,601 C1508,615 1509,625 1510,637" fill="none" stroke="#a8d2be" stroke-linecap="round" filter="url(#b1)" stroke-width="2.2" opacity=".8"/><path d="M1647,592 C1652,602 1656,612 1659,622" fill="none" stroke="#a8d2be" stroke-linecap="round" filter="url(#b1)" stroke-width="2.2" opacity=".8"/><path d="M1574,689 C1585,690 1595,691 1604,692" fill="none" stroke="#a8d2be" stroke-linecap="round" filter="url(#b1)" stroke-width="3" opacity=".8"/><path d="M1557,572 C1560,580 1562,586 1568,594 C1575,600 1580,603 1583,605 C1588,612 1590,618 1591,622 C1595,630 1600,636 1601,640 C1602,646 1601,650 1601,651 C1597,656 1593,660 1590,662 M1583,605 C1590,600 1597,595 1604,592 C1615,588 1625,584 1636,582 M1590,662 C1597,660 1603,658 1610,657 C1618,659 1625,661 1630,662 C1640,660 1650,656 1660,653 M1532,670 C1540,672 1547,673 1552,674 C1565,670 1578,666 1590,662" fill="none" stroke="#3a4d43" stroke-linecap="round" stroke-width="1.3"/>
</g>
<path d="M1479.0,610.0 C1479.0,600.8 1479.3,600.3 1488.0,588.6 C1496.7,576.9 1517.7,552.0 1531.0,539.7 C1544.3,527.4 1556.8,520.4 1568.0,515.0 C1579.2,509.6 1588.8,507.1 1598.0,507.6 C1607.2,508.1 1615.8,512.6 1623.0,518.0 C1630.2,523.4 1634.4,531.0 1641.0,539.7 C1647.6,548.4 1656.4,558.3 1662.6,570.0 C1668.8,581.7 1675.4,597.7 1678.0,610.0 C1680.6,622.3 1680.1,633.4 1678.0,643.6 C1675.9,653.8 1670.8,663.4 1665.6,671.0 C1660.4,678.6 1653.1,683.3 1647.0,689.5 C1640.9,695.7 1637.2,703.4 1629.0,708.0 C1620.8,712.6 1607.2,716.0 1598.0,717.0 C1588.8,718.0 1583.2,717.6 1574.0,714.0 C1564.8,710.4 1553.2,702.8 1543.0,695.6 C1532.8,688.4 1522.2,679.7 1513.0,671.0 C1503.8,662.3 1493.7,653.8 1488.0,643.6 C1482.3,633.4 1479.0,619.2 1479.0,610.0 Z" fill="none" stroke="#2f3d36" stroke-width="1.1"/>
<clipPath id="h2"><ellipse cx="1337" cy="406" rx="33.5" ry="24"/></clipPath>
<clipPath id="h3"><ellipse cx="1505" cy="566" rx="29" ry="26"/></clipPath>
<clipPath id="h12"><ellipse cx="710.5" cy="852" rx="29.5" ry="23.5"/></clipPath>
<circle cx="1030" cy="349.5" r="25.5" fill="#7fa08f" opacity=".8"/><circle cx="1030" cy="349.5" r="24" fill="#2f3a35"/><circle cx="1029.5" cy="352.5" r="22" fill="#f6ce96"/>
<circle cx="743" cy="622" r="25.5" fill="#7fa08f" opacity=".8"/><circle cx="743" cy="622" r="24" fill="#2f3a35"/><circle cx="743" cy="622.5" r="22.6" fill="#eec593"/>
<ellipse cx="1337" cy="406" rx="35" ry="25.5" fill="#8db09f"/><ellipse cx="1337" cy="406" rx="33.5" ry="24" fill="#3b4a43"/><g clip-path="url(#h2)"><circle cx="1268" cy="415" r="50" fill="#e6c291"/></g>
<ellipse cx="1505" cy="566" rx="30.5" ry="27.5" fill="#8db09f"/><ellipse cx="1505" cy="566" rx="29" ry="26" fill="#3b4a43"/><g clip-path="url(#h3)"><circle cx="1458" cy="567" r="40" fill="#e9c192"/></g>
<ellipse cx="710.5" cy="852" rx="31" ry="25" fill="#8db09f"/><ellipse cx="710.5" cy="852" rx="29.5" ry="23.5" fill="#3b4a43"/><g clip-path="url(#h12)"><circle cx="762" cy="851" r="30" fill="#eac495"/></g></g>
<rect x="0" y="1058" width="1770" height="3" fill="#000"/>
<rect x="0" y="0" width="3" height="1061" fill="#000"/>
<rect x="2" y="1055" width="3" height="5" fill="#000"/>
<rect x="20" y="1055" width="3" height="5" fill="#000"/>
<rect x="39" y="1055" width="3" height="5" fill="#000"/>
<rect x="57" y="1051" width="3" height="9" fill="#000"/>
<rect x="75" y="1055" width="3" height="5" fill="#000"/>
<rect x="94" y="1055" width="3" height="5" fill="#000"/>
<rect x="112" y="1055" width="3" height="5" fill="#000"/>
<rect x="131" y="1055" width="3" height="5" fill="#000"/>
<rect x="149" y="1048" width="3" height="12" fill="#000"/>
<rect x="167" y="1055" width="3" height="5" fill="#000"/>
<rect x="186" y="1055" width="3" height="5" fill="#000"/>
<rect x="204" y="1055" width="3" height="5" fill="#000"/>
<rect x="223" y="1055" width="3" height="5" fill="#000"/>
<rect x="241" y="1051" width="3" height="9" fill="#000"/>
<rect x="259" y="1055" width="3" height="5" fill="#000"/>
<rect x="278" y="1055" width="3" height="5" fill="#000"/>
<rect x="296" y="1055" width="3" height="5" fill="#000"/>
<rect x="314" y="1055" width="3" height="5" fill="#000"/>
<rect x="333" y="1048" width="3" height="12" fill="#000"/>
<rect x="351" y="1055" width="3" height="5" fill="#000"/>
<rect x="369" y="1055" width="3" height="5" fill="#000"/>
<rect x="388" y="1055" width="3" height="5" fill="#000"/>
<rect x="406" y="1055" width="3" height="5" fill="#000"/>
<rect x="425" y="1051" width="3" height="9" fill="#000"/>
<rect x="443" y="1055" width="3" height="5" fill="#000"/>
<rect x="461" y="1055" width="3" height="5" fill="#000"/>
<rect x="480" y="1055" width="3" height="5" fill="#000"/>
<rect x="498" y="1055" width="3" height="5" fill="#000"/>
<rect x="517" y="1048" width="3" height="12" fill="#000"/>
<rect x="535" y="1055" width="3" height="5" fill="#000"/>
<rect x="553" y="1055" width="3" height="5" fill="#000"/>
<rect x="572" y="1055" width="3" height="5" fill="#000"/>
<rect x="590" y="1055" width="3" height="5" fill="#000"/>
<rect x="608" y="1051" width="3" height="9" fill="#000"/>
<rect x="627" y="1055" width="3" height="5" fill="#000"/>
<rect x="645" y="1055" width="3" height="5" fill="#000"/>
<rect x="663" y="1055" width="3" height="5" fill="#000"/>
<rect x="682" y="1055" width="3" height="5" fill="#000"/>
<rect x="700" y="1048" width="3" height="12" fill="#000"/>
<rect x="719" y="1055" width="3" height="5" fill="#000"/>
<rect x="737" y="1055" width="3" height="5" fill="#000"/>
<rect x="755" y="1055" width="3" height="5" fill="#000"/>
<rect x="774" y="1055" width="3" height="5" fill="#000"/>
<rect x="792" y="1051" width="3" height="9" fill="#000"/>
<rect x="811" y="1055" width="3" height="5" fill="#000"/>
<rect x="829" y="1055" width="3" height="5" fill="#000"/>
<rect x="847" y="1055" width="3" height="5" fill="#000"/>
<rect x="866" y="1055" width="3" height="5" fill="#000"/>
<rect x="884" y="1048" width="3" height="12" fill="#000"/>
<rect x="902" y="1055" width="3" height="5" fill="#000"/>
<rect x="921" y="1055" width="3" height="5" fill="#000"/>
<rect x="939" y="1055" width="3" height="5" fill="#000"/>
<rect x="957" y="1055" width="3" height="5" fill="#000"/>
<rect x="976" y="1051" width="3" height="9" fill="#000"/>
<rect x="994" y="1055" width="3" height="5" fill="#000"/>
<rect x="1013" y="1055" width="3" height="5" fill="#000"/>
<rect x="1031" y="1055" width="3" height="5" fill="#000"/>
<rect x="1049" y="1055" width="3" height="5" fill="#000"/>
<rect x="1068" y="1048" width="3" height="12" fill="#000"/>
<rect x="1086" y="1055" width="3" height="5" fill="#000"/>
<rect x="1105" y="1055" width="3" height="5" fill="#000"/>
<rect x="1123" y="1055" width="3" height="5" fill="#000"/>
<rect x="1141" y="1055" width="3" height="5" fill="#000"/>
<rect x="1160" y="1051" width="3" height="9" fill="#000"/>
<rect x="1178" y="1055" width="3" height="5" fill="#000"/>
<rect x="1196" y="1055" width="3" height="5" fill="#000"/>
<rect x="1215" y="1055" width="3" height="5" fill="#000"/>
<rect x="1233" y="1055" width="3" height="5" fill="#000"/>
<rect x="1251" y="1048" width="3" height="12" fill="#000"/>
<rect x="1270" y="1055" width="3" height="5" fill="#000"/>
<rect x="1288" y="1055" width="3" height="5" fill="#000"/>
<rect x="1307" y="1055" width="3" height="5" fill="#000"/>
<rect x="1325" y="1055" width="3" height="5" fill="#000"/>
<rect x="1343" y="1051" width="3" height="9" fill="#000"/>
<rect x="1362" y="1055" width="3" height="5" fill="#000"/>
<rect x="1380" y="1055" width="3" height="5" fill="#000"/>
<rect x="1399" y="1055" width="3" height="5" fill="#000"/>
<rect x="1417" y="1055" width="3" height="5" fill="#000"/>
<rect x="1435" y="1048" width="3" height="12" fill="#000"/>
<rect x="1454" y="1055" width="3" height="5" fill="#000"/>
<rect x="1472" y="1055" width="3" height="5" fill="#000"/>
<rect x="1490" y="1055" width="3" height="5" fill="#000"/>
<rect x="1509" y="1055" width="3" height="5" fill="#000"/>
<rect x="1527" y="1051" width="3" height="9" fill="#000"/>
<rect x="1545" y="1055" width="3" height="5" fill="#000"/>
<rect x="1564" y="1055" width="3" height="5" fill="#000"/>
<rect x="1582" y="1055" width="3" height="5" fill="#000"/>
<rect x="1601" y="1055" width="3" height="5" fill="#000"/>
<rect x="1619" y="1048" width="3" height="12" fill="#000"/>
<rect x="1637" y="1055" width="3" height="5" fill="#000"/>
<rect x="1656" y="1055" width="3" height="5" fill="#000"/>
<rect x="1674" y="1055" width="3" height="5" fill="#000"/>
<rect x="1693" y="1055" width="3" height="5" fill="#000"/>
<rect x="1711" y="1051" width="3" height="9" fill="#000"/>
<rect x="1729" y="1055" width="3" height="5" fill="#000"/>
<rect x="1748" y="1055" width="3" height="5" fill="#000"/>
<rect x="1766" y="1055" width="3" height="5" fill="#000"/>
<rect x="1" y="1053" width="6" height="3" fill="#000"/>
<rect x="1" y="1035" width="6" height="3" fill="#000"/>
<rect x="1" y="1017" width="6" height="3" fill="#000"/>
<rect x="1" y="998" width="10" height="3" fill="#000"/>
<rect x="1" y="980" width="6" height="3" fill="#000"/>
<rect x="1" y="961" width="6" height="3" fill="#000"/>
<rect x="1" y="943" width="6" height="3" fill="#000"/>
<rect x="1" y="925" width="6" height="3" fill="#000"/>
<rect x="1" y="906" width="13" height="3" fill="#000"/>
<rect x="1" y="888" width="6" height="3" fill="#000"/>
<rect x="1" y="870" width="6" height="3" fill="#000"/>
<rect x="1" y="851" width="6" height="3" fill="#000"/>
<rect x="1" y="833" width="6" height="3" fill="#000"/>
<rect x="1" y="814" width="10" height="3" fill="#000"/>
<rect x="1" y="796" width="6" height="3" fill="#000"/>
<rect x="1" y="778" width="6" height="3" fill="#000"/>
<rect x="1" y="759" width="6" height="3" fill="#000"/>
<rect x="1" y="741" width="6" height="3" fill="#000"/>
<rect x="1" y="723" width="13" height="3" fill="#000"/>
<rect x="1" y="704" width="6" height="3" fill="#000"/>
<rect x="1" y="686" width="6" height="3" fill="#000"/>
<rect x="1" y="667" width="6" height="3" fill="#000"/>
<rect x="1" y="649" width="6" height="3" fill="#000"/>
<rect x="1" y="631" width="10" height="3" fill="#000"/>
<rect x="1" y="612" width="6" height="3" fill="#000"/>
<rect x="1" y="594" width="6" height="3" fill="#000"/>
<rect x="1" y="576" width="6" height="3" fill="#000"/>
<rect x="1" y="557" width="6" height="3" fill="#000"/>
<rect x="1" y="539" width="13" height="3" fill="#000"/>
<rect x="1" y="521" width="6" height="3" fill="#000"/>
<rect x="1" y="502" width="6" height="3" fill="#000"/>
<rect x="1" y="484" width="6" height="3" fill="#000"/>
<rect x="1" y="465" width="6" height="3" fill="#000"/>
<rect x="1" y="447" width="10" height="3" fill="#000"/>
<rect x="1" y="429" width="6" height="3" fill="#000"/>
<rect x="1" y="410" width="6" height="3" fill="#000"/>
<rect x="1" y="392" width="6" height="3" fill="#000"/>
<rect x="1" y="374" width="6" height="3" fill="#000"/>
<rect x="1" y="355" width="13" height="3" fill="#000"/>
<rect x="1" y="337" width="6" height="3" fill="#000"/>
<rect x="1" y="318" width="6" height="3" fill="#000"/>
<rect x="1" y="300" width="6" height="3" fill="#000"/>
<rect x="1" y="282" width="6" height="3" fill="#000"/>
<rect x="1" y="263" width="10" height="3" fill="#000"/>
<rect x="1" y="245" width="6" height="3" fill="#000"/>
<rect x="1" y="227" width="6" height="3" fill="#000"/>
<rect x="1" y="208" width="6" height="3" fill="#000"/>
<rect x="1" y="190" width="6" height="3" fill="#000"/>
<rect x="1" y="171" width="13" height="3" fill="#000"/>
<rect x="1" y="153" width="6" height="3" fill="#000"/>
<rect x="1" y="135" width="6" height="3" fill="#000"/>
<rect x="1" y="116" width="6" height="3" fill="#000"/>
<rect x="1" y="98" width="6" height="3" fill="#000"/>
<rect x="1" y="80" width="10" height="3" fill="#000"/>
<rect x="1" y="61" width="6" height="3" fill="#000"/>
<rect x="1" y="43" width="6" height="3" fill="#000"/>
<rect x="1" y="25" width="6" height="3" fill="#000"/>
<rect x="1" y="6" width="6" height="3" fill="#000"/>
<rect x="1" y="1059" width="1770" height="1" fill="#fff"/>
<rect x="1" y="0" width="1" height="1060" fill="#fff"/>
<rect x="3" y="1056" width="1" height="3" fill="#fff"/>
<rect x="21" y="1056" width="1" height="3" fill="#fff"/>
<rect x="40" y="1056" width="1" height="3" fill="#fff"/>
<rect x="58" y="1052" width="1" height="7" fill="#fff"/>
<rect x="76" y="1056" width="1" height="3" fill="#fff"/>
<rect x="95" y="1056" width="1" height="3" fill="#fff"/>
<rect x="113" y="1056" width="1" height="3" fill="#fff"/>
<rect x="132" y="1056" width="1" height="3" fill="#fff"/>
<rect x="150" y="1049" width="1" height="10" fill="#fff"/>
<rect x="168" y="1056" width="1" height="3" fill="#fff"/>
<rect x="187" y="1056" width="1" height="3" fill="#fff"/>
<rect x="205" y="1056" width="1" height="3" fill="#fff"/>
<rect x="224" y="1056" width="1" height="3" fill="#fff"/>
<rect x="242" y="1052" width="1" height="7" fill="#fff"/>
<rect x="260" y="1056" width="1" height="3" fill="#fff"/>
<rect x="279" y="1056" width="1" height="3" fill="#fff"/>
<rect x="297" y="1056" width="1" height="3" fill="#fff"/>
<rect x="315" y="1056" width="1" height="3" fill="#fff"/>
<rect x="334" y="1049" width="1" height="10" fill="#fff"/>
<rect x="352" y="1056" width="1" height="3" fill="#fff"/>
<rect x="370" y="1056" width="1" height="3" fill="#fff"/>
<rect x="389" y="1056" width="1" height="3" fill="#fff"/>
<rect x="407" y="1056" width="1" height="3" fill="#fff"/>
<rect x="426" y="1052" width="1" height="7" fill="#fff"/>
<rect x="444" y="1056" width="1" height="3" fill="#fff"/>
<rect x="462" y="1056" width="1" height="3" fill="#fff"/>
<rect x="481" y="1056" width="1" height="3" fill="#fff"/>
<rect x="499" y="1056" width="1" height="3" fill="#fff"/>
<rect x="518" y="1049" width="1" height="10" fill="#fff"/>
<rect x="536" y="1056" width="1" height="3" fill="#fff"/>
<rect x="554" y="1056" width="1" height="3" fill="#fff"/>
<rect x="573" y="1056" width="1" height="3" fill="#fff"/>
<rect x="591" y="1056" width="1" height="3" fill="#fff"/>
<rect x="609" y="1052" width="1" height="7" fill="#fff"/>
<rect x="628" y="1056" width="1" height="3" fill="#fff"/>
<rect x="646" y="1056" width="1" height="3" fill="#fff"/>
<rect x="664" y="1056" width="1" height="3" fill="#fff"/>
<rect x="683" y="1056" width="1" height="3" fill="#fff"/>
<rect x="701" y="1049" width="1" height="10" fill="#fff"/>
<rect x="720" y="1056" width="1" height="3" fill="#fff"/>
<rect x="738" y="1056" width="1" height="3" fill="#fff"/>
<rect x="756" y="1056" width="1" height="3" fill="#fff"/>
<rect x="775" y="1056" width="1" height="3" fill="#fff"/>
<rect x="793" y="1052" width="1" height="7" fill="#fff"/>
<rect x="812" y="1056" width="1" height="3" fill="#fff"/>
<rect x="830" y="1056" width="1" height="3" fill="#fff"/>
<rect x="848" y="1056" width="1" height="3" fill="#fff"/>
<rect x="867" y="1056" width="1" height="3" fill="#fff"/>
<rect x="885" y="1049" width="1" height="10" fill="#fff"/>
<rect x="903" y="1056" width="1" height="3" fill="#fff"/>
<rect x="922" y="1056" width="1" height="3" fill="#fff"/>
<rect x="940" y="1056" width="1" height="3" fill="#fff"/>
<rect x="958" y="1056" width="1" height="3" fill="#fff"/>
<rect x="977" y="1052" width="1" height="7" fill="#fff"/>
<rect x="995" y="1056" width="1" height="3" fill="#fff"/>
<rect x="1014" y="1056" width="1" height="3" fill="#fff"/>
<rect x="1032" y="1056" width="1" height="3" fill="#fff"/>
<rect x="1050" y="1056" width="1" height="3" fill="#fff"/>
<rect x="1069" y="1049" width="1" height="10" fill="#fff"/>
<rect x="1087" y="1056" width="1" height="3" fill="#fff"/>
<rect x="1106" y="1056" width="1" height="3" fill="#fff"/>
<rect x="1124" y="1056" width="1" height="3" fill="#fff"/>
<rect x="1142" y="1056" width="1" height="3" fill="#fff"/>
<rect x="1161" y="1052" width="1" height="7" fill="#fff"/>
<rect x="1179" y="1056" width="1" height="3" fill="#fff"/>
<rect x="1197" y="1056" width="1" height="3" fill="#fff"/>
<rect x="1216" y="1056" width="1" height="3" fill="#fff"/>
<rect x="1234" y="1056" width="1" height="3" fill="#fff"/>
<rect x="1252" y="1049" width="1" height="10" fill="#fff"/>
<rect x="1271" y="1056" width="1" height="3" fill="#fff"/>
<rect x="1289" y="1056" width="1" height="3" fill="#fff"/>
<rect x="1308" y="1056" width="1" height="3" fill="#fff"/>
<rect x="1326" y="1056" width="1" height="3" fill="#fff"/>
<rect x="1344" y="1052" width="1" height="7" fill="#fff"/>
<rect x="1363" y="1056" width="1" height="3" fill="#fff"/>
<rect x="1381" y="1056" width="1" height="3" fill="#fff"/>
<rect x="1400" y="1056" width="1" height="3" fill="#fff"/>
<rect x="1418" y="1056" width="1" height="3" fill="#fff"/>
<rect x="1436" y="1049" width="1" height="10" fill="#fff"/>
<rect x="1455" y="1056" width="1" height="3" fill="#fff"/>
<rect x="1473" y="1056" width="1" height="3" fill="#fff"/>
<rect x="1491" y="1056" width="1" height="3" fill="#fff"/>
<rect x="1510" y="1056" width="1" height="3" fill="#fff"/>
<rect x="1528" y="1052" width="1" height="7" fill="#fff"/>
<rect x="1546" y="1056" width="1" height="3" fill="#fff"/>
<rect x="1565" y="1056" width="1" height="3" fill="#fff"/>
<rect x="1583" y="1056" width="1" height="3" fill="#fff"/>
<rect x="1602" y="1056" width="1" height="3" fill="#fff"/>
<rect x="1620" y="1049" width="1" height="10" fill="#fff"/>
<rect x="1638" y="1056" width="1" height="3" fill="#fff"/>
<rect x="1657" y="1056" width="1" height="3" fill="#fff"/>
<rect x="1675" y="1056" width="1" height="3" fill="#fff"/>
<rect x="1694" y="1056" width="1" height="3" fill="#fff"/>
<rect x="1712" y="1052" width="1" height="7" fill="#fff"/>
<rect x="1730" y="1056" width="1" height="3" fill="#fff"/>
<rect x="1749" y="1056" width="1" height="3" fill="#fff"/>
<rect x="1767" y="1056" width="1" height="3" fill="#fff"/>
<rect x="1" y="1054" width="4" height="1" fill="#fff"/>
<rect x="1" y="1036" width="4" height="1" fill="#fff"/>
<rect x="1" y="1018" width="4" height="1" fill="#fff"/>
<rect x="1" y="999" width="8" height="1" fill="#fff"/>
<rect x="1" y="981" width="4" height="1" fill="#fff"/>
<rect x="1" y="962" width="4" height="1" fill="#fff"/>
<rect x="1" y="944" width="4" height="1" fill="#fff"/>
<rect x="1" y="926" width="4" height="1" fill="#fff"/>
<rect x="1" y="907" width="11" height="1" fill="#fff"/>
<rect x="1" y="889" width="4" height="1" fill="#fff"/>
<rect x="1" y="871" width="4" height="1" fill="#fff"/>
<rect x="1" y="852" width="4" height="1" fill="#fff"/>
<rect x="1" y="834" width="4" height="1" fill="#fff"/>
<rect x="1" y="815" width="8" height="1" fill="#fff"/>
<rect x="1" y="797" width="4" height="1" fill="#fff"/>
<rect x="1" y="779" width="4" height="1" fill="#fff"/>
<rect x="1" y="760" width="4" height="1" fill="#fff"/>
<rect x="1" y="742" width="4" height="1" fill="#fff"/>
<rect x="1" y="724" width="11" height="1" fill="#fff"/>
<rect x="1" y="705" width="4" height="1" fill="#fff"/>
<rect x="1" y="687" width="4" height="1" fill="#fff"/>
<rect x="1" y="668" width="4" height="1" fill="#fff"/>
<rect x="1" y="650" width="4" height="1" fill="#fff"/>
<rect x="1" y="632" width="8" height="1" fill="#fff"/>
<rect x="1" y="613" width="4" height="1" fill="#fff"/>
<rect x="1" y="595" width="4" height="1" fill="#fff"/>
<rect x="1" y="577" width="4" height="1" fill="#fff"/>
<rect x="1" y="558" width="4" height="1" fill="#fff"/>
<rect x="1" y="540" width="11" height="1" fill="#fff"/>
<rect x="1" y="522" width="4" height="1" fill="#fff"/>
<rect x="1" y="503" width="4" height="1" fill="#fff"/>
<rect x="1" y="485" width="4" height="1" fill="#fff"/>
<rect x="1" y="466" width="4" height="1" fill="#fff"/>
<rect x="1" y="448" width="8" height="1" fill="#fff"/>
<rect x="1" y="430" width="4" height="1" fill="#fff"/>
<rect x="1" y="411" width="4" height="1" fill="#fff"/>
<rect x="1" y="393" width="4" height="1" fill="#fff"/>
<rect x="1" y="375" width="4" height="1" fill="#fff"/>
<rect x="1" y="356" width="11" height="1" fill="#fff"/>
<rect x="1" y="338" width="4" height="1" fill="#fff"/>
<rect x="1" y="319" width="4" height="1" fill="#fff"/>
<rect x="1" y="301" width="4" height="1" fill="#fff"/>
<rect x="1" y="283" width="4" height="1" fill="#fff"/>
<rect x="1" y="264" width="8" height="1" fill="#fff"/>
<rect x="1" y="246" width="4" height="1" fill="#fff"/>
<rect x="1" y="228" width="4" height="1" fill="#fff"/>
<rect x="1" y="209" width="4" height="1" fill="#fff"/>
<rect x="1" y="191" width="4" height="1" fill="#fff"/>
<rect x="1" y="172" width="11" height="1" fill="#fff"/>
<rect x="1" y="154" width="4" height="1" fill="#fff"/>
<rect x="1" y="136" width="4" height="1" fill="#fff"/>
<rect x="1" y="117" width="4" height="1" fill="#fff"/>
<rect x="1" y="99" width="4" height="1" fill="#fff"/>
<rect x="1" y="81" width="8" height="1" fill="#fff"/>
<rect x="1" y="62" width="4" height="1" fill="#fff"/>
<rect x="1" y="44" width="4" height="1" fill="#fff"/>
<rect x="1" y="26" width="4" height="1" fill="#fff"/>
<rect x="1" y="7" width="4" height="1" fill="#fff"/>
<g class="lab">
<text x="145.2" y="1041" textLength="9.5" lengthAdjust="spacingAndGlyphs">0</text>
<text x="324.0" y="1041" textLength="19.5" lengthAdjust="spacingAndGlyphs">10</text>
<text x="507.8" y="1041" textLength="19.5" lengthAdjust="spacingAndGlyphs">20</text>
<text x="691.5" y="1041" textLength="19.5" lengthAdjust="spacingAndGlyphs">30</text>
<text x="875.2" y="1041" textLength="19.5" lengthAdjust="spacingAndGlyphs">40</text>
<text x="1059.0" y="1041" textLength="19.5" lengthAdjust="spacingAndGlyphs">50</text>
<text x="1242.8" y="1041" textLength="19.5" lengthAdjust="spacingAndGlyphs">60</text>
<text x="1426.5" y="1041" textLength="19.5" lengthAdjust="spacingAndGlyphs">70</text>
<text x="1610.2" y="1041" textLength="19.5" lengthAdjust="spacingAndGlyphs">80</text>
<text x="17.5" y="913.5" textLength="9.5" lengthAdjust="spacingAndGlyphs">0</text>
<text x="17.5" y="730.0" textLength="19.5" lengthAdjust="spacingAndGlyphs">10</text>
<text x="17.5" y="546.5" textLength="9.5" lengthAdjust="spacingAndGlyphs">2</text>
<text x="17.5" y="363.0" textLength="9.5" lengthAdjust="spacingAndGlyphs">3</text>
<text x="17.5" y="179.5" textLength="9.5" lengthAdjust="spacingAndGlyphs">4</text>
<text x="12" y="1046" textLength="30.5" lengthAdjust="spacingAndGlyphs">mm</text>
</g>
</svg>

<div id="panel">
  <svg style="position:absolute;left:15px;top:16px" width="12" height="8" viewBox="0 0 12 8"><path d="M1.5,6.5 L6,2 L10.5,6.5" fill="none" stroke="#fff" stroke-width="1.6"/></svg>
  <div class="hdr">Show/Hide</div>
  <svg style="position:absolute;left:288.7px;top:5.7px" width="25" height="25" viewBox="0 0 24 24"><path fill="#efecf1" d="M11 18h2v-2h-2v2zm1-16C6.48 2 2 6.48 2 12s4.48 10 10 10 10-4.48 10-10S17.52 2 12 2zm0 18c-4.41 0-8-3.59-8-8s3.59-8 8-8 8 3.59 8 8-3.59 8-8 8zm0-14c-2.21 0-4 1.79-4 4h2c0-1.1.9-2 2-2s2 .9 2 2c0 2-3 1.75-3 5h2c0-2.25 3-2.5 3-5 0-2.21-1.79-4-4-4z"/></svg>
  <div class="row" style="top:35px;background:#908ea0"><svg style="left:31px;top:7px" width="18" height="18" viewBox="0 0 24 24"><path fill="#efecf1" d="M12 6c3.79 0 7.17 2.13 8.82 5.5-.59 1.22-1.42 2.27-2.41 3.12l1.41 1.41c1.39-1.23 2.49-2.77 3.18-4.53C21.27 7.11 17 4 12 4c-1.27 0-2.49.2-3.64.57l1.65 1.65C10.66 6.09 11.32 6 12 6zm-1.07 1.14L13 9.21c.57.25 1.03.71 1.28 1.28l2.07 2.07c.08-.34.14-.7.14-1.07C16.5 9.01 14.48 7 12 7c-.37 0-.72.05-1.07.14zM2.01 3.87l2.68 2.68C3.06 7.83 1.77 9.53 1 11.5 2.73 15.89 7 19 12 19c1.52 0 2.98-.29 4.32-.82l3.42 3.42 1.41-1.41L3.42 2.45 2.01 3.87zm7.5 7.5l2.61 2.61c-.04.01-.08.02-.12.02-1.38 0-2.5-1.12-2.5-2.5 0-.05.01-.08.01-.13zm-3.4-3.4l1.75 1.75c-.23.55-.36 1.15-.36 1.78 0 2.48 2.02 4.5 4.5 4.5.63 0 1.23-.13 1.77-.36l.98.98c-.88.24-1.8.38-2.75.38-3.79 0-7.17-2.13-8.82-5.5.7-1.43 1.72-2.61 2.93-3.53z"/></svg><span class="t">Antagonist</span></div>
<div class="row" style="top:65px;background:#bb9665"><svg style="left:31px;top:6px" width="18" height="18" viewBox="0 0 24 24"><path fill="#efecf1" d="M12 4.5C7 4.5 2.73 7.61 1 12c1.73 4.39 6 7.5 11 7.5s9.27-3.11 11-7.5c-1.73-4.39-6-7.5-11-7.5zM12 17c-2.76 0-5-2.24-5-5s2.24-5 5-5 5 2.24 5 5-2.24 5-5 5zm0-8c-1.66 0-3 1.34-3 3s1.34 3 3 3 3-1.34 3-3-1.34-3-3-3z"/></svg><span class="t">Jaw scans</span></div>
<div class="row" style="top:95px;background:#1a5e32"><svg style="left:10px;top:9px" width="10" height="12" viewBox="0 0 10 12"><path d="M2.2,1.5 L7.2,6 L2.2,10.5" fill="none" stroke="#f0edf2" stroke-width="2.3"/></svg><svg style="left:31px;top:7px" width="18" height="18" viewBox="0 0 24 24"><path fill="#efecf1" d="M12 6c3.79 0 7.17 2.13 8.82 5.5-.59 1.22-1.42 2.27-2.41 3.12l1.41 1.41c1.39-1.23 2.49-2.77 3.18-4.53C21.27 7.11 17 4 12 4c-1.27 0-2.49.2-3.64.57l1.65 1.65C10.66 6.09 11.32 6 12 6zm-1.07 1.14L13 9.21c.57.25 1.03.71 1.28 1.28l2.07 2.07c.08-.34.14-.7.14-1.07C16.5 9.01 14.48 7 12 7c-.37 0-.72.05-1.07.14zM2.01 3.87l2.68 2.68C3.06 7.83 1.77 9.53 1 11.5 2.73 15.89 7 19 12 19c1.52 0 2.98-.29 4.32-.82l3.42 3.42 1.41-1.41L3.42 2.45 2.01 3.87zm7.5 7.5l2.61 2.61c-.04.01-.08.02-.12.02-1.38 0-2.5-1.12-2.5-2.5 0-.05.01-.08.01-.13zm-3.4-3.4l1.75 1.75c-.23.55-.36 1.15-.36 1.78 0 2.48 2.02 4.5 4.5 4.5.63 0 1.23-.13 1.77-.36l.98.98c-.88.24-1.8.38-2.75.38-3.79 0-7.17-2.13-8.82-5.5.7-1.43 1.72-2.61 2.93-3.53z"/></svg><span class="t">Scan abutments</span></div>
<div class="row" style="top:125px;background:#53437f"><svg style="left:10px;top:9px" width="10" height="12" viewBox="0 0 10 12"><path d="M2.2,1.5 L7.2,6 L2.2,10.5" fill="none" stroke="#f0edf2" stroke-width="2.3"/></svg><svg style="left:31px;top:7px" width="18" height="18" viewBox="0 0 24 24"><path fill="#efecf1" d="M12 6c3.79 0 7.17 2.13 8.82 5.5-.59 1.22-1.42 2.27-2.41 3.12l1.41 1.41c1.39-1.23 2.49-2.77 3.18-4.53C21.27 7.11 17 4 12 4c-1.27 0-2.49.2-3.64.57l1.65 1.65C10.66 6.09 11.32 6 12 6zm-1.07 1.14L13 9.21c.57.25 1.03.71 1.28 1.28l2.07 2.07c.08-.34.14-.7.14-1.07C16.5 9.01 14.48 7 12 7c-.37 0-.72.05-1.07.14zM2.01 3.87l2.68 2.68C3.06 7.83 1.77 9.53 1 11.5 2.73 15.89 7 19 12 19c1.52 0 2.98-.29 4.32-.82l3.42 3.42 1.41-1.41L3.42 2.45 2.01 3.87zm7.5 7.5l2.61 2.61c-.04.01-.08.02-.12.02-1.38 0-2.5-1.12-2.5-2.5 0-.05.01-.08.01-.13zm-3.4-3.4l1.75 1.75c-.23.55-.36 1.15-.36 1.78 0 2.48 2.02 4.5 4.5 4.5.63 0 1.23-.13 1.77-.36l.98.98c-.88.24-1.8.38-2.75.38-3.79 0-7.17-2.13-8.82-5.5.7-1.43 1.72-2.61 2.93-3.53z"/></svg><span class="t">Implant analog parts</span></div>
<div class="row" style="top:155px;background:#444444"><svg style="left:10px;top:9px" width="10" height="12" viewBox="0 0 10 12"><path d="M2.2,1.5 L7.2,6 L2.2,10.5" fill="none" stroke="#f0edf2" stroke-width="2.3"/></svg><svg style="left:31px;top:7px" width="18" height="18" viewBox="0 0 24 24"><path fill="#efecf1" d="M12 6c3.79 0 7.17 2.13 8.82 5.5-.59 1.22-1.42 2.27-2.41 3.12l1.41 1.41c1.39-1.23 2.49-2.77 3.18-4.53C21.27 7.11 17 4 12 4c-1.27 0-2.49.2-3.64.57l1.65 1.65C10.66 6.09 11.32 6 12 6zm-1.07 1.14L13 9.21c.57.25 1.03.71 1.28 1.28l2.07 2.07c.08-.34.14-.7.14-1.07C16.5 9.01 14.48 7 12 7c-.37 0-.72.05-1.07.14zM2.01 3.87l2.68 2.68C3.06 7.83 1.77 9.53 1 11.5 2.73 15.89 7 19 12 19c1.52 0 2.98-.29 4.32-.82l3.42 3.42 1.41-1.41L3.42 2.45 2.01 3.87zm7.5 7.5l2.61 2.61c-.04.01-.08.02-.12.02-1.38 0-2.5-1.12-2.5-2.5 0-.05.01-.08.01-.13zm-3.4-3.4l1.75 1.75c-.23.55-.36 1.15-.36 1.78 0 2.48 2.02 4.5 4.5 4.5.63 0 1.23-.13 1.77-.36l.98.98c-.88.24-1.8.38-2.75.38-3.79 0-7.17-2.13-8.82-5.5.7-1.43 1.72-2.61 2.93-3.53z"/></svg><span class="t">Abutments</span></div>
<div class="row" style="top:185px;background:#a3a127"><svg style="left:10px;top:9px" width="10" height="12" viewBox="0 0 10 12"><path d="M2.2,1.5 L7.2,6 L2.2,10.5" fill="none" stroke="#f0edf2" stroke-width="2.3"/></svg><svg style="left:31px;top:7px" width="18" height="18" viewBox="0 0 24 24"><path fill="#efecf1" d="M12 6c3.79 0 7.17 2.13 8.82 5.5-.59 1.22-1.42 2.27-2.41 3.12l1.41 1.41c1.39-1.23 2.49-2.77 3.18-4.53C21.27 7.11 17 4 12 4c-1.27 0-2.49.2-3.64.57l1.65 1.65C10.66 6.09 11.32 6 12 6zm-1.07 1.14L13 9.21c.57.25 1.03.71 1.28 1.28l2.07 2.07c.08-.34.14-.7.14-1.07C16.5 9.01 14.48 7 12 7c-.37 0-.72.05-1.07.14zM2.01 3.87l2.68 2.68C3.06 7.83 1.77 9.53 1 11.5 2.73 15.89 7 19 12 19c1.52 0 2.98-.29 4.32-.82l3.42 3.42 1.41-1.41L3.42 2.45 2.01 3.87zm7.5 7.5l2.61 2.61c-.04.01-.08.02-.12.02-1.38 0-2.5-1.12-2.5-2.5 0-.05.01-.08.01-.13zm-3.4-3.4l1.75 1.75c-.23.55-.36 1.15-.36 1.78 0 2.48 2.02 4.5 4.5 4.5.63 0 1.23-.13 1.77-.36l.98.98c-.88.24-1.8.38-2.75.38-3.79 0-7.17-2.13-8.82-5.5.7-1.43 1.72-2.61 2.93-3.53z"/></svg><span class="t">Screw channels</span></div>
<div class="row" style="top:215px;background:#00c9c0"><svg style="left:31px;top:7px" width="18" height="18" viewBox="0 0 24 24"><path fill="#efecf1" d="M12 6c3.79 0 7.17 2.13 8.82 5.5-.59 1.22-1.42 2.27-2.41 3.12l1.41 1.41c1.39-1.23 2.49-2.77 3.18-4.53C21.27 7.11 17 4 12 4c-1.27 0-2.49.2-3.64.57l1.65 1.65C10.66 6.09 11.32 6 12 6zm-1.07 1.14L13 9.21c.57.25 1.03.71 1.28 1.28l2.07 2.07c.08-.34.14-.7.14-1.07C16.5 9.01 14.48 7 12 7c-.37 0-.72.05-1.07.14zM2.01 3.87l2.68 2.68C3.06 7.83 1.77 9.53 1 11.5 2.73 15.89 7 19 12 19c1.52 0 2.98-.29 4.32-.82l3.42 3.42 1.41-1.41L3.42 2.45 2.01 3.87zm7.5 7.5l2.61 2.61c-.04.01-.08.02-.12.02-1.38 0-2.5-1.12-2.5-2.5 0-.05.01-.08.01-.13zm-3.4-3.4l1.75 1.75c-.23.55-.36 1.15-.36 1.78 0 2.48 2.02 4.5 4.5 4.5.63 0 1.23-.13 1.77-.36l.98.98c-.88.24-1.8.38-2.75.38-3.79 0-7.17-2.13-8.82-5.5.7-1.43 1.72-2.61 2.93-3.53z"/></svg><span class="t">Pre-op scans</span></div>
<div class="row" style="top:245px;background:#b06d7a"><svg style="left:10px;top:9px" width="10" height="12" viewBox="0 0 10 12"><path d="M2.2,1.5 L7.2,6 L2.2,10.5" fill="none" stroke="#f0edf2" stroke-width="2.3"/></svg><svg style="left:31px;top:7px" width="18" height="18" viewBox="0 0 24 24"><path fill="#efecf1" d="M12 6c3.79 0 7.17 2.13 8.82 5.5-.59 1.22-1.42 2.27-2.41 3.12l1.41 1.41c1.39-1.23 2.49-2.77 3.18-4.53C21.27 7.11 17 4 12 4c-1.27 0-2.49.2-3.64.57l1.65 1.65C10.66 6.09 11.32 6 12 6zm-1.07 1.14L13 9.21c.57.25 1.03.71 1.28 1.28l2.07 2.07c.08-.34.14-.7.14-1.07C16.5 9.01 14.48 7 12 7c-.37 0-.72.05-1.07.14zM2.01 3.87l2.68 2.68C3.06 7.83 1.77 9.53 1 11.5 2.73 15.89 7 19 12 19c1.52 0 2.98-.29 4.32-.82l3.42 3.42 1.41-1.41L3.42 2.45 2.01 3.87zm7.5 7.5l2.61 2.61c-.04.01-.08.02-.12.02-1.38 0-2.5-1.12-2.5-2.5 0-.05.01-.08.01-.13zm-3.4-3.4l1.75 1.75c-.23.55-.36 1.15-.36 1.78 0 2.48 2.02 4.5 4.5 4.5.63 0 1.23-.13 1.77-.36l.98.98c-.88.24-1.8.38-2.75.38-3.79 0-7.17-2.13-8.82-5.5.7-1.43 1.72-2.61 2.93-3.53z"/></svg><span class="t">Gingiva scans</span></div>
<div class="row" style="top:275px;background:#ff0000"><svg style="left:10px;top:9px" width="10" height="12" viewBox="0 0 10 12"><path d="M2.2,1.5 L7.2,6 L2.2,10.5" fill="none" stroke="#f0edf2" stroke-width="2.3"/></svg><svg style="left:31px;top:7px" width="18" height="18" viewBox="0 0 24 24"><path fill="#efecf1" d="M12 6c3.79 0 7.17 2.13 8.82 5.5-.59 1.22-1.42 2.27-2.41 3.12l1.41 1.41c1.39-1.23 2.49-2.77 3.18-4.53C21.27 7.11 17 4 12 4c-1.27 0-2.49.2-3.64.57l1.65 1.65C10.66 6.09 11.32 6 12 6zm-1.07 1.14L13 9.21c.57.25 1.03.71 1.28 1.28l2.07 2.07c.08-.34.14-.7.14-1.07C16.5 9.01 14.48 7 12 7c-.37 0-.72.05-1.07.14zM2.01 3.87l2.68 2.68C3.06 7.83 1.77 9.53 1 11.5 2.73 15.89 7 19 12 19c1.52 0 2.98-.29 4.32-.82l3.42 3.42 1.41-1.41L3.42 2.45 2.01 3.87zm7.5 7.5l2.61 2.61c-.04.01-.08.02-.12.02-1.38 0-2.5-1.12-2.5-2.5 0-.05.01-.08.01-.13zm-3.4-3.4l1.75 1.75c-.23.55-.36 1.15-.36 1.78 0 2.48 2.02 4.5 4.5 4.5.63 0 1.23-.13 1.77-.36l.98.98c-.88.24-1.8.38-2.75.38-3.79 0-7.17-2.13-8.82-5.5.7-1.43 1.72-2.61 2.93-3.53z"/></svg><span class="t">Min. thickness</span></div>
<div class="row" style="top:305px;background:#585080"><svg style="left:10px;top:9px" width="10" height="12" viewBox="0 0 10 12"><path d="M2.2,1.5 L7.2,6 L2.2,10.5" fill="none" stroke="#f0edf2" stroke-width="2.3"/></svg><svg style="left:31px;top:7px" width="18" height="18" viewBox="0 0 24 24"><path fill="#efecf1" d="M12 6c3.79 0 7.17 2.13 8.82 5.5-.59 1.22-1.42 2.27-2.41 3.12l1.41 1.41c1.39-1.23 2.49-2.77 3.18-4.53C21.27 7.11 17 4 12 4c-1.27 0-2.49.2-3.64.57l1.65 1.65C10.66 6.09 11.32 6 12 6zm-1.07 1.14L13 9.21c.57.25 1.03.71 1.28 1.28l2.07 2.07c.08-.34.14-.7.14-1.07C16.5 9.01 14.48 7 12 7c-.37 0-.72.05-1.07.14zM2.01 3.87l2.68 2.68C3.06 7.83 1.77 9.53 1 11.5 2.73 15.89 7 19 12 19c1.52 0 2.98-.29 4.32-.82l3.42 3.42 1.41-1.41L3.42 2.45 2.01 3.87zm7.5 7.5l2.61 2.61c-.04.01-.08.02-.12.02-1.38 0-2.5-1.12-2.5-2.5 0-.05.01-.08.01-.13zm-3.4-3.4l1.75 1.75c-.23.55-.36 1.15-.36 1.78 0 2.48 2.02 4.5 4.5 4.5.63 0 1.23-.13 1.77-.36l.98.98c-.88.24-1.8.38-2.75.38-3.79 0-7.17-2.13-8.82-5.5.7-1.43 1.72-2.61 2.93-3.53z"/></svg><span class="t">All other parts</span></div>
<div class="row" style="top:335px;background:#990099"><svg style="left:31px;top:7px" width="18" height="18" viewBox="0 0 24 24"><path fill="#efecf1" d="M12 6c3.79 0 7.17 2.13 8.82 5.5-.59 1.22-1.42 2.27-2.41 3.12l1.41 1.41c1.39-1.23 2.49-2.77 3.18-4.53C21.27 7.11 17 4 12 4c-1.27 0-2.49.2-3.64.57l1.65 1.65C10.66 6.09 11.32 6 12 6zm-1.07 1.14L13 9.21c.57.25 1.03.71 1.28 1.28l2.07 2.07c.08-.34.14-.7.14-1.07C16.5 9.01 14.48 7 12 7c-.37 0-.72.05-1.07.14zM2.01 3.87l2.68 2.68C3.06 7.83 1.77 9.53 1 11.5 2.73 15.89 7 19 12 19c1.52 0 2.98-.29 4.32-.82l3.42 3.42 1.41-1.41L3.42 2.45 2.01 3.87zm7.5 7.5l2.61 2.61c-.04.01-.08.02-.12.02-1.38 0-2.5-1.12-2.5-2.5 0-.05.01-.08.01-.13zm-3.4-3.4l1.75 1.75c-.23.55-.36 1.15-.36 1.78 0 2.48 2.02 4.5 4.5 4.5.63 0 1.23-.13 1.77-.36l.98.98c-.88.24-1.8.38-2.75.38-3.79 0-7.17-2.13-8.82-5.5.7-1.43 1.72-2.61 2.93-3.53z"/></svg><span class="t">Full anatomic</span></div>
<div class="row" style="top:365px;background:#5f8a6e"><svg style="left:31px;top:6px" width="18" height="18" viewBox="0 0 24 24"><path fill="#efecf1" d="M12 4.5C7 4.5 2.73 7.61 1 12c1.73 4.39 6 7.5 11 7.5s9.27-3.11 11-7.5c-1.73-4.39-6-7.5-11-7.5zM12 17c-2.76 0-5-2.24-5-5s2.24-5 5-5 5 2.24 5 5-2.24 5-5 5zm0-8c-1.66 0-3 1.34-3 3s1.34 3 3 3 3-1.34 3-3-1.34-3-3-3z"/></svg><span class="t">Merged parts</span></div>
<div class="row" style="top:395px;background:#53437f"><svg style="left:10px;top:9px" width="10" height="12" viewBox="0 0 10 12"><path d="M2.2,1.5 L7.2,6 L2.2,10.5" fill="none" stroke="#f0edf2" stroke-width="2.3"/></svg><svg style="left:31px;top:7px" width="18" height="18" viewBox="0 0 24 24"><path fill="#efecf1" d="M12 6c3.79 0 7.17 2.13 8.82 5.5-.59 1.22-1.42 2.27-2.41 3.12l1.41 1.41c1.39-1.23 2.49-2.77 3.18-4.53C21.27 7.11 17 4 12 4c-1.27 0-2.49.2-3.64.57l1.65 1.65C10.66 6.09 11.32 6 12 6zm-1.07 1.14L13 9.21c.57.25 1.03.71 1.28 1.28l2.07 2.07c.08-.34.14-.7.14-1.07C16.5 9.01 14.48 7 12 7c-.37 0-.72.05-1.07.14zM2.01 3.87l2.68 2.68C3.06 7.83 1.77 9.53 1 11.5 2.73 15.89 7 19 12 19c1.52 0 2.98-.29 4.32-.82l3.42 3.42 1.41-1.41L3.42 2.45 2.01 3.87zm7.5 7.5l2.61 2.61c-.04.01-.08.02-.12.02-1.38 0-2.5-1.12-2.5-2.5 0-.05.01-.08.01-.13zm-3.4-3.4l1.75 1.75c-.23.55-.36 1.15-.36 1.78 0 2.48 2.02 4.5 4.5 4.5.63 0 1.23-.13 1.77-.36l.98.98c-.88.24-1.8.38-2.75.38-3.79 0-7.17-2.13-8.82-5.5.7-1.43 1.72-2.61 2.93-3.53z"/></svg><span class="t">Bottom of designs</span></div>
<div class="row" style="top:425px;background:#3a9561"><svg style="left:31px;top:7px" width="18" height="18" viewBox="0 0 24 24"><path fill="#efecf1" d="M12 6c3.79 0 7.17 2.13 8.82 5.5-.59 1.22-1.42 2.27-2.41 3.12l1.41 1.41c1.39-1.23 2.49-2.77 3.18-4.53C21.27 7.11 17 4 12 4c-1.27 0-2.49.2-3.64.57l1.65 1.65C10.66 6.09 11.32 6 12 6zm-1.07 1.14L13 9.21c.57.25 1.03.71 1.28 1.28l2.07 2.07c.08-.34.14-.7.14-1.07C16.5 9.01 14.48 7 12 7c-.37 0-.72.05-1.07.14zM2.01 3.87l2.68 2.68C3.06 7.83 1.77 9.53 1 11.5 2.73 15.89 7 19 12 19c1.52 0 2.98-.29 4.32-.82l3.42 3.42 1.41-1.41L3.42 2.45 2.01 3.87zm7.5 7.5l2.61 2.61c-.04.01-.08.02-.12.02-1.38 0-2.5-1.12-2.5-2.5 0-.05.01-.08.01-.13zm-3.4-3.4l1.75 1.75c-.23.55-.36 1.15-.36 1.78 0 2.48 2.02 4.5 4.5 4.5.63 0 1.23-.13 1.77-.36l.98.98c-.88.24-1.8.38-2.75.38-3.79 0-7.17-2.13-8.82-5.5.7-1.43 1.72-2.61 2.93-3.53z"/></svg><span class="t" style="letter-spacing:-0.16px">Upper Full Arch Essencia.stl (16-... ...</span></div>
  <div style="position:absolute;left:35px;top:459px;width:250px;height:2px;background:#9588bd"></div>
  <svg style="position:absolute;left:15px;top:475px" width="12" height="8" viewBox="0 0 12 8"><path d="M1,1 L6,6 L11,1" fill="none" stroke="#fff" stroke-width="1.8"/></svg>
  <div style="position:absolute;left:36px;top:470px;font-size:15px;color:#fff;line-height:18px">Teeth</div>
  <div style="position:absolute;left:35px;top:496px;width:250px;height:2px;background:#9588bd"></div>
  <svg style="position:absolute;left:15px;top:511px" width="12" height="8" viewBox="0 0 12 8"><path d="M1,1 L6,6 L11,1" fill="none" stroke="#fff" stroke-width="1.8"/></svg>
  <div style="position:absolute;left:35px;top:506px;font-size:15px;color:#fff;line-height:18px">Hidden</div>
  <div style="position:absolute;left:131px;top:508px;font-size:15px;font-weight:bold;color:#e8845a;line-height:18px">Show all</div>
  <div style="position:absolute;left:230px;top:508px;font-size:15px;font-weight:bold;color:#fff;line-height:18px">Auto hide</div>
</div>

<div id="tb">
  <svg style="position:absolute;left:9px;top:13px" width="18" height="16" viewBox="0 0 18 16"><path d="M3.61,14.48 A7.9,7.9 0 0 1 12.46,1.6" fill="none" stroke="#222" stroke-width="2.1"/><path d="M16.16,5.36 A7.9,7.9 0 0 1 14.39,14.48" fill="none" stroke="#222" stroke-width="2.1"/><path d="M7.4,7.5 L15.3,2.6 L10.6,10.4 Z" fill="#222"/><circle cx="9" cy="9" r="2.4" fill="#222"/></svg>
  <div style="position:absolute;left:36px;top:6px;width:738px;height:18px;background:linear-gradient(90deg,#ff00ff 0,#ff00ff 1px,#ff0000 1px,#ff1000 8%,#ff5a00 16%,#ff9a00 28.5%,#ffd000 37%,#ffff00 42.6%,#a0ff00 50%,#00ff00 57%,#00ff90 64%,#00ffdd 69.8%,#00f0ff 72.8%,#00aaff 79%,#0040ff 86%,#0000ee 91%,#0000c0 100%)"></div>
  <svg style="position:absolute;left:550px;top:6px" width="25" height="18" viewBox="0 0 25 18"><path d="M1,0 L10.5,18 L15,18 L23,0 Z" fill="#fff"/></svg>
  <div style="position:absolute;left:245px;top:6px;width:2px;height:18px;background:#fff;opacity:.85"></div>
  <div style="position:absolute;left:350px;top:6px;width:2px;height:18px;background:#fff;opacity:.85"></div>
  <div style="position:absolute;left:456px;top:6px;width:2px;height:18px;background:#fff;opacity:.85"></div>
  <div style="position:absolute;left:40px;top:8px;font-size:13.6px;font-weight:bold;color:#fff;line-height:15px;letter-spacing:0.2px">INTERSECTION</div>
  <div style="position:absolute;left:684px;top:8px;font-size:13.6px;font-weight:bold;color:#fff;line-height:15px;letter-spacing:-0.1px">CLEARANCE</div>
  <div class="num" style="left:68px;top:26px">-0.5</div>
  <div class="num" style="left:141px;top:29px">-0.4</div>
  <div class="num" style="left:246px;top:29px">-0.3</div>
  <div class="num" style="left:351px;top:29px">-0.2</div>
  <div class="num" style="left:457px;top:29px">-0.1</div>
  <div class="num" style="left:562px;top:29px">0</div>
  <div class="num" style="left:760px;top:26px">0.2</div>
  <svg style="position:absolute;left:783px;top:17px" width="16" height="10" viewBox="0 0 16 10"><path d="M3,8 L8,3 L13,8" fill="none" stroke="#222" stroke-width="1.8"/></svg>
  <div style="position:absolute;left:38px;top:57px;width:80px;height:2px;background:#e8845a"></div>
  <div style="position:absolute;left:118px;top:57px;width:30px;height:2px;background:#777"></div>
  <div style="position:absolute;left:110px;top:51px;width:15px;height:15px;border-radius:50%;background:#e8845a"></div>
  <div style="position:absolute;left:198px;top:52px;font-size:14px;font-weight:bold;color:#222;line-height:10px">...</div>
  <div style="position:absolute;left:651px;top:57px;width:17px;height:2px;background:#e8845a"></div>
  <div style="position:absolute;left:668px;top:57px;width:92px;height:2px;background:#777"></div>
  <div style="position:absolute;left:660px;top:51px;width:15px;height:15px;border-radius:50%;background:#e8845a"></div>
  <div style="position:absolute;left:6px;top:77px;width:210px;height:28px;background:#f0f0f0;border-bottom:1px solid #777;border-radius:3px 3px 0 0"></div>
  <div style="position:absolute;left:11px;top:82px;font-size:15px;color:#333;line-height:18px">Show contact areas</div>
  <svg style="position:absolute;left:200px;top:87px" width="12" height="8" viewBox="0 0 12 8"><path d="M1.5,1.8 L5.5,5.8 L9.5,1.8" fill="none" stroke="#666" stroke-width="1.3"/></svg>
  <svg style="position:absolute;left:217.8px;top:76.9px" width="25" height="25" viewBox="0 0 24 24"><path fill="#3c2f6d" d="M11 18h2v-2h-2v2zm1-16C6.48 2 2 6.48 2 12s4.48 10 10 10 10-4.48 10-10S17.52 2 12 2zm0 18c-4.41 0-8-3.59-8-8s3.59-8 8-8 8 3.59 8 8-3.59 8-8 8zm0-14c-2.21 0-4 1.79-4 4h2c0-1.1.9-2 2-2s2 .9 2 2c0 2-3 1.75-3 5h2c0-2.25 3-2.5 3-5 0-2.21-1.79-4-4-4z"/></svg>
  <div class="btn" style="left:247px;width:174px">Antagonists</div>
  <div class="btn" style="left:423px;width:174px">Adjacents</div>
  <div class="btn" style="left:599px;width:174px;border-color:#3c3070;color:#3c3070">Include healthy</div>
</div>

<svg style="position:absolute;left:1700px;top:50px" width="60" height="50" viewBox="0 0 60 50">
  <defs><mask id="bm"><rect width="60" height="50" fill="#fff"/><circle cx="42.3" cy="14" r="12.5" fill="#000"/></mask></defs>
  <circle cx="23.3" cy="30.5" r="17.6" fill="#8878b8" mask="url(#bm)"/>
  <path d="M16,36 L30,36 L28,33 L28,27 A5,5.5 0 0 0 18,27 L18,33 Z" fill="#fff"/><circle cx="23" cy="37.5" r="1.6" fill="#fff"/>
  <circle cx="42.3" cy="14" r="10" fill="#ff0000"/>
  <text x="42.3" y="18.5" text-anchor="middle" font-family="Liberation Sans" font-size="12" fill="#fff">9+</text>
</svg>
</body></html>
